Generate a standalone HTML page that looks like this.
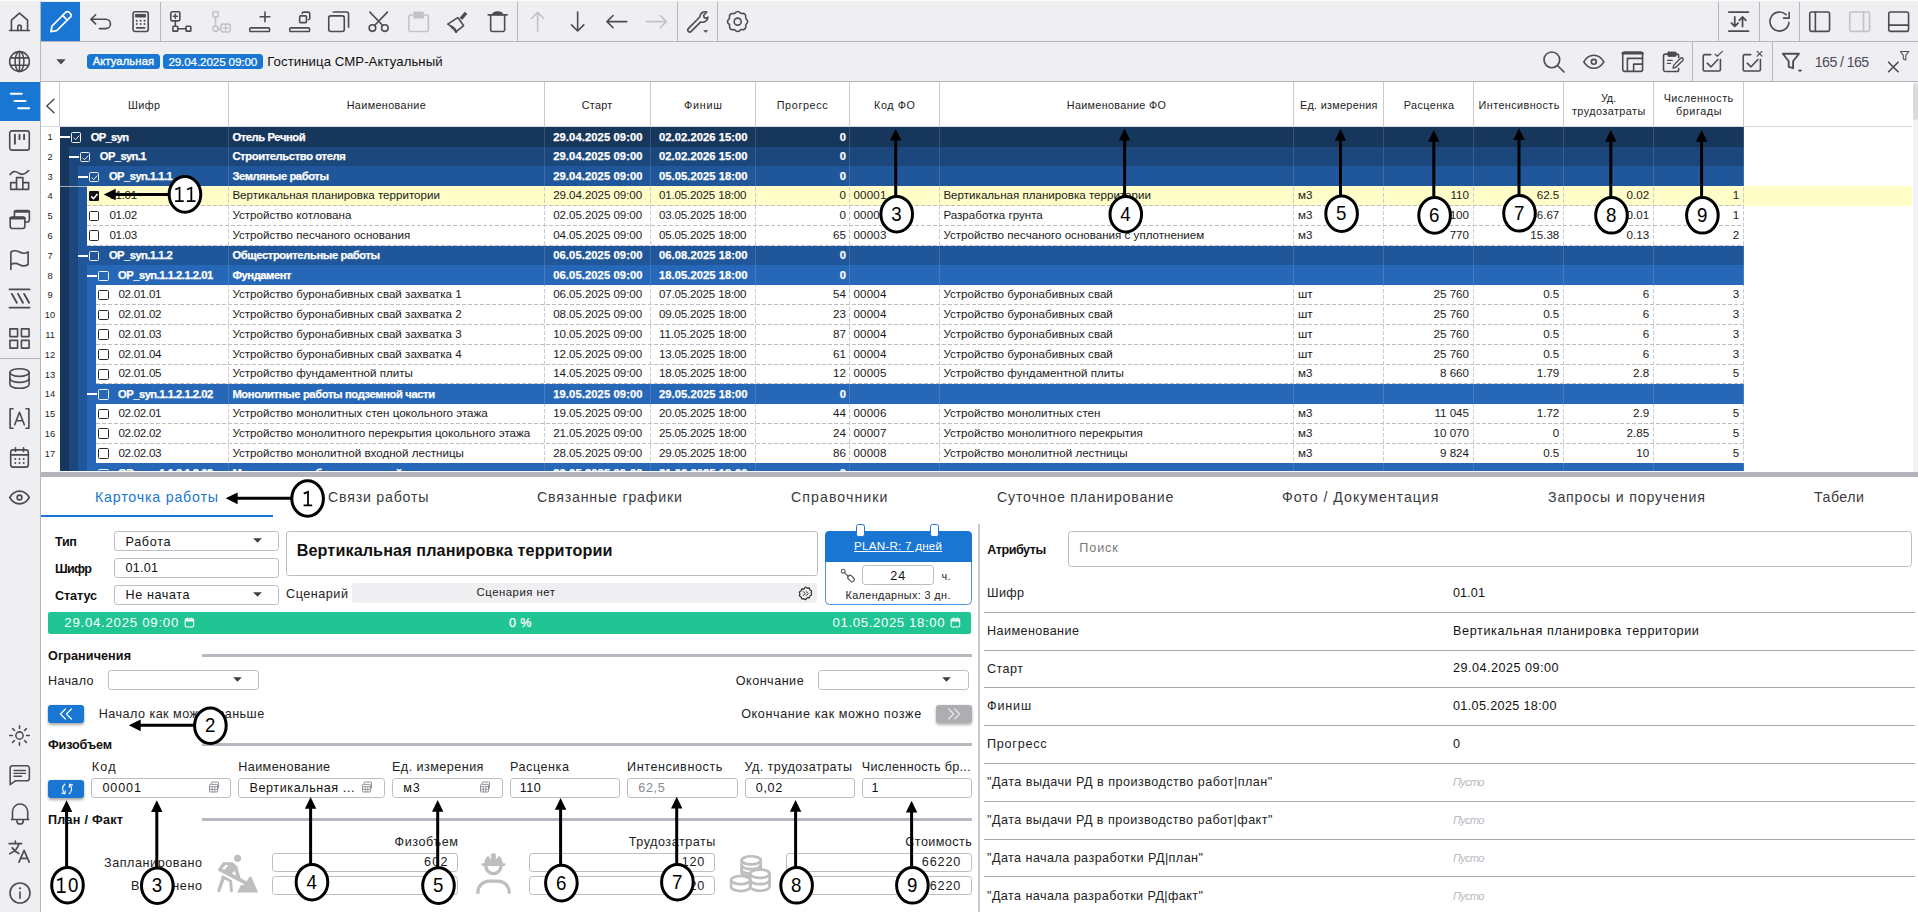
<!DOCTYPE html>
<html lang="ru"><head><meta charset="utf-8"><title>Plan-R</title><style>html,body{margin:0;padding:0}body{width:1918px;height:912px;overflow:hidden;position:relative;background:#fff;font-family:"Liberation Sans",sans-serif;}.a{position:absolute;display:block}.t{position:absolute;white-space:nowrap;display:block}</style></head><body>
<div class="a" style="left:0px;top:0px;width:1918px;height:81.5px;background:#efeff2;"></div>
<div class="a" style="left:0px;top:0px;width:40px;height:912px;background:#efeff2;"></div>
<div class="a" style="left:40px;top:0px;width:1px;height:912px;background:#b5b5bd;"></div>
<div class="a" style="left:0px;top:0px;width:1918px;height:1px;background:#fdfdfd;"></div>
<div class="a" style="left:41px;top:40.8px;width:1877px;height:1px;background:#b5b5bd;"></div>
<div class="a" style="left:41px;top:81px;width:1877px;height:1px;background:#b5b5bd;"></div>
<svg class="a" style="left:8.3px;top:10.2px;color:#4b4b52;" width="23" height="23" viewBox="0 0 24 24" fill="none" stroke="#4b4b52" stroke-width="1.7" stroke-linecap="round" stroke-linejoin="round"><path d="M1.600 21.400h20.800"/><path d="M3.600 21.400V10.600L12 3.200l8.400 7.400v10.800"/><path d="M10.200 21.400v-3.800a1.800 1.800 0 0 1 3.600 0v3.800"/></svg>
<svg class="a" style="left:8.2px;top:50.2px;color:#4b4b52;" width="23" height="23" viewBox="0 0 24 24" fill="none" stroke="#4b4b52" stroke-width="1.6" stroke-linecap="round" stroke-linejoin="round"><circle cx="12" cy="12" r="10.3"/><ellipse cx="12" cy="12" rx="4.6" ry="10.3"/><path d="M12 1.7v20.6M2.6 8.2h18.8M2.6 15.8h18.8"/></svg>
<div class="a" style="left:0px;top:81.5px;width:40px;height:39.5px;background:#1976d2;"></div>
<svg class="a" style="left:8.8px;top:89.8px;color:#fff;" width="22" height="22" viewBox="0 0 24 24" fill="none" stroke="#fff" stroke-width="2.2" stroke-linecap="round" stroke-linejoin="round"><path d="M2 4h12M6 12h12M10 20h12"/></svg>
<svg class="a" style="left:8.1px;top:129px;color:#4b4b52;" width="23" height="23" viewBox="0 0 24 24" fill="none" stroke="#4b4b52" stroke-width="1.7" stroke-linecap="round" stroke-linejoin="round"><rect x="1.8" y="2" width="20.4" height="20" rx="2.2"/><path d="M7.2 6v9.5M12 6v4.6M16.8 6v4.6" stroke-width="2"/></svg>
<svg class="a" style="left:8.1px;top:169px;color:#4b4b52;" width="23" height="23" viewBox="0 0 24 24" fill="none" stroke="#4b4b52" stroke-width="1.7" stroke-linecap="round" stroke-linejoin="round"><path d="M2.200 5.800c2.500-3.600 5.500-4 8.600-1.700s6.500 2.200 10.800-2.500"/><path d="M2.800 21.200h18.700v-7h-6M8.900 21.200V9h6.600v12.200M8.900 14.200H2.800v7"/></svg>
<svg class="a" style="left:8.1px;top:208.8px;color:#4b4b52;" width="23" height="23" viewBox="0 0 24 24" fill="none" stroke="#4b4b52" stroke-width="1.7" stroke-linecap="round" stroke-linejoin="round"><path d="M6.700 8.400V3.800a2.200 2.200 0 0 1 2.200-2.200h11.200a2.200 2.200 0 0 1 2.200 2.200v7.600a2.200 2.200 0 0 1-2.200 2.200h-2.500"/><path d="M7.200 2.600h14.600" stroke-width="2.600"/><rect x="2.300" y="8.400" width="15.300" height="11.900" rx="2.200"/><path d="M2.800 9.600h14.300" stroke-width="2.800"/></svg>
<svg class="a" style="left:8.1px;top:248px;color:#4b4b52;" width="23" height="23" viewBox="0 0 24 24" fill="none" stroke="#4b4b52" stroke-width="1.7" stroke-linecap="round" stroke-linejoin="round"><path d="M3 22.5V4.2c3.2-2.2 6-1.6 9 0s6 1.8 9-.2v13.2c-3 2-6 1.800-9 .2s-5.800-2.200-9 0"/></svg>
<svg class="a" style="left:8.1px;top:287px;color:#4b4b52;" width="23" height="23" viewBox="0 0 24 24" fill="none" stroke="#4b4b52" stroke-width="1.7" stroke-linecap="round" stroke-linejoin="round"><path d="M1.500 2.500h21M1.500 21.500h21" stroke-width="1.900"/><path d="M4 7.200l5.200 9.200M10.400 7.200l5.200 9.200M16.800 7.200l5.200 9.200" stroke-width="2"/></svg>
<svg class="a" style="left:8.1px;top:326.5px;color:#4b4b52;" width="23" height="23" viewBox="0 0 24 24" fill="none" stroke="#4b4b52" stroke-width="1.7" stroke-linecap="round" stroke-linejoin="round"><rect x="2" y="2" width="8" height="8"/><rect x="14" y="2" width="8" height="8"/><rect x="2" y="14" width="8" height="8"/><rect x="14" y="14" width="8" height="8"/></svg>
<div class="a" style="left:0px;top:357.6px;width:40px;height:1px;background:#b5b5bd;"></div>
<svg class="a" style="left:8.1px;top:367.1px;color:#4b4b52;" width="23" height="23" viewBox="0 0 24 24" fill="none" stroke="#4b4b52" stroke-width="1.7" stroke-linecap="round" stroke-linejoin="round"><ellipse cx="12" cy="5.800" rx="10" ry="4"/><path d="M2 5.800v12.400c0 2.200 4.500 4 10 4s10-1.800 10-4V5.800"/><path d="M2 12c0 2.200 4.500 4 10 4s10-1.800 10-4"/></svg>
<svg class="a" style="left:8.1px;top:406.8px;color:#4b4b52;" width="23" height="23" viewBox="0 0 24 24" fill="none" stroke="#4b4b52" stroke-width="1.7" stroke-linecap="round" stroke-linejoin="round"><path d="M5.200 1.800H2.200v20.400h3M18.800 1.800h3v20.400h-3"/><path d="M7 18.500L12 5.500l5 13M8.700 14.300h6.600"/></svg>
<svg class="a" style="left:8.1px;top:446.3px;color:#4b4b52;" width="23" height="23" viewBox="0 0 24 24" fill="none" stroke="#4b4b52" stroke-width="1.7" stroke-linecap="round" stroke-linejoin="round"><rect x="2.800" y="4" width="18.400" height="18" rx="2.400"/><path d="M2.800 9.200h18.400M7.800 1.800v4M16.200 1.800v4"/><path d="M7.600 13.500h.01M12 13.500h.01M16.400 13.500h.01M7.600 17.800h.01M12 17.800h.01M16.400 17.800h.01" stroke-width="2"/></svg>
<svg class="a" style="left:8.1px;top:486.1px;color:#4b4b52;" width="23" height="23" viewBox="0 0 24 24" fill="none" stroke="#4b4b52" stroke-width="1.7" stroke-linecap="round" stroke-linejoin="round"><path d="M1.800 12c2.600-4.400 6-6.600 10.200-6.600s7.600 2.200 10.200 6.600c-2.600 4.400-6 6.600-10.200 6.600S4.400 16.400 1.800 12z"/><circle cx="12" cy="12" r="2.500"/></svg>
<svg class="a" style="left:8.1px;top:723.7px;color:#4b4b52;" width="23" height="23" viewBox="0 0 24 24" fill="none" stroke="#4b4b52" stroke-width="1.6" stroke-linecap="round" stroke-linejoin="round"><circle cx="12" cy="12" r="3.800"/><path d="M12 1.800v2.800M12 19.400v2.800M1.800 12h2.800M19.400 12h2.800M4.800 4.800l2 2M17.200 17.200l2 2M4.800 19.200l2-2M17.200 6.800l2-2"/></svg>
<svg class="a" style="left:7.85px;top:763.25px;color:#4b4b52;" width="23.5" height="23.5" viewBox="0 0 24 24" fill="none" stroke="#4b4b52" stroke-width="1.6" stroke-linecap="round" stroke-linejoin="round"><path d="M2.200 5.200a2.400 2.400 0 0 1 2.400-2.400h14.800a2.400 2.400 0 0 1 2.400 2.400v10.600a2.400 2.400 0 0 1-2.400 2.400H7.400L2.200 22.200z"/><path d="M6.200 7.600h11.600M6.200 10.600h11.600M6.200 13.600h7.600" stroke-width="1.500"/></svg>
<svg class="a" style="left:7.6px;top:801.5px;color:#4b4b52;" width="24" height="24" viewBox="0 0 24 24" fill="none" stroke="#4b4b52" stroke-width="1.6" stroke-linecap="round" stroke-linejoin="round"><path d="M3.400 17.500h17.400"/><path d="M4.500 17.500V9.600a7.600 7.600 0 0 1 15.200 0v7.900"/><path d="M9 18.400v.5a3.100 3.100 0 0 0 6.200 0v-.5"/></svg>
<svg class="a" style="left:7.1px;top:839.1px;color:#4b4b52;" width="25" height="25" viewBox="0 0 24 24" fill="none" stroke="#4b4b52" stroke-width="1.6" stroke-linecap="round" stroke-linejoin="round"><path d="M2 4.500h12M8 2v2.500M11.500 4.500c-.9 4.200-4 7.600-8.800 9.600M5 8.400c1.300 2.400 3.400 4.200 6.400 5.600"/><path d="M11.500 22.200l4.900-11.200 4.900 11.200M13.200 18.600h6.400"/></svg>
<svg class="a" style="left:7.6px;top:880.8px;color:#4b4b52;" width="24" height="24" viewBox="0 0 24 24" fill="none" stroke="#4b4b52" stroke-width="1.6" stroke-linecap="round" stroke-linejoin="round"><circle cx="12" cy="12" r="10"/><path d="M12 11v6.200"/><path d="M12 7.300h.01" stroke-width="2.200"/></svg>
<div class="a" style="left:41px;top:1.8px;width:39.3px;height:39px;background:#1976d2;"></div>
<svg class="a" style="left:49px;top:10px;color:#fff;" width="23" height="23" viewBox="0 0 24 24" fill="none" stroke="#fff" stroke-width="1.8" stroke-linecap="round" stroke-linejoin="round"><path d="M2 22.500l1.200-5.800L17.600 2.300a2.300 2.300 0 0 1 3.300 0l1.600 1.600a2.300 2.300 0 0 1 0 3.300L8 21.600z"/><path d="M14.200 5.700l4.800 4.800"/></svg>
<svg class="a" style="left:88.85px;top:9.85px;color:#4b4b52;" width="23.3" height="23.3" viewBox="0 0 24 24" fill="none" stroke="#4b4b52" stroke-width="1.65" stroke-linecap="round" stroke-linejoin="round"><path d="M6.800 4.900L2 9.600l4.800 4.700M2 9.600h15.300a4.800 4.800 0 0 1 0 9.600H10.700"/></svg>
<svg class="a" style="left:129.05px;top:9.85px;color:#4b4b52;" width="23.3" height="23.3" viewBox="0 0 24 24" fill="none" stroke="#4b4b52" stroke-width="1.65" stroke-linecap="round" stroke-linejoin="round"><rect x="4.200" y="1.800" width="15.600" height="20.400" rx="2"/><rect x="7" y="4.600" width="10" height="2.600" fill="currentColor" stroke-width="1"/><path d="M8 11h.01M12 11h.01M16 11h.01M8 14.500h.01M12 14.500h.01M16 14.500h.01M8 18.400h8" stroke-width="2"/></svg>
<svg class="a" style="left:168.85px;top:9.85px;color:#4b4b52;" width="23.3" height="23.3" viewBox="0 0 24 24" fill="none" stroke="#4b4b52" stroke-width="1.65" stroke-linecap="round" stroke-linejoin="round"><rect x="1.800" y="1.800" width="9.400" height="9.400" rx="1.600"/><path d="M6.500 4.300v4.400M4.300 6.500h4.400" stroke-width="1.500"/><path d="M6.500 11.200v5.600M9 19.300h8.500"/><rect x="4" y="16.800" width="5" height="5" rx=".8"/><rect x="17.500" y="16.800" width="5" height="5" rx=".8"/></svg>
<svg class="a" style="left:208.65px;top:9.85px;color:#c2c2c8;" width="23.3" height="23.3" viewBox="0 0 24 24" fill="none" stroke="#c2c2c8" stroke-width="1.65" stroke-linecap="round" stroke-linejoin="round"><rect x="4" y="1.800" width="5.400" height="5.400" rx="1"/><path d="M6.700 7.200v9.400M9.400 19.300h3"/><circle cx="6.700" cy="19.300" r="2.700"/><rect x="12.400" y="14.600" width="9.400" height="8" rx="1.600"/><path d="M17.100 16.400v4.400M14.900 18.600h4.400" stroke-width="1.500"/></svg>
<svg class="a" style="left:247.95px;top:9.85px;color:#4b4b52;" width="23.3" height="23.3" viewBox="0 0 24 24" fill="none" stroke="#4b4b52" stroke-width="1.65" stroke-linecap="round" stroke-linejoin="round"><rect x="1.800" y="18.400" width="20.400" height="3.800" rx="1.200"/><path d="M17.500 2v10M12.500 7h10"/></svg>
<svg class="a" style="left:287.75px;top:9.85px;color:#4b4b52;" width="23.3" height="23.3" viewBox="0 0 24 24" fill="none" stroke="#4b4b52" stroke-width="1.65" stroke-linecap="round" stroke-linejoin="round"><rect x="1.800" y="18.400" width="20.400" height="3.800" rx="1.200"/><rect x="12" y="6" width="7" height="7" rx="1"/><path d="M14.600 3.600a1.400 1.400 0 0 1 1.400-1.400h5a1.400 1.400 0 0 1 1.400 1.400v5a1.400 1.400 0 0 1-1.400 1.400"/></svg>
<svg class="a" style="left:327.05px;top:9.85px;color:#4b4b52;" width="23.3" height="23.3" viewBox="0 0 24 24" fill="none" stroke="#4b4b52" stroke-width="1.65" stroke-linecap="round" stroke-linejoin="round"><rect x="1.800" y="6" width="16" height="16.200" rx="2"/><path d="M6.400 2h13.800a2 2 0 0 1 2 2v13.800"/></svg>
<svg class="a" style="left:366.65px;top:9.85px;color:#4b4b52;" width="23.3" height="23.3" viewBox="0 0 24 24" fill="none" stroke="#4b4b52" stroke-width="1.65" stroke-linecap="round" stroke-linejoin="round"><circle cx="5.600" cy="18.600" r="3.400"/><circle cx="18.400" cy="18.600" r="3.400"/><path d="M7.800 16L21 2.200M16.200 16L3 2.200"/></svg>
<svg class="a" style="left:406.65px;top:9.85px;color:#c2c2c8;" width="23.3" height="23.3" viewBox="0 0 24 24" fill="none" stroke="#c2c2c8" stroke-width="1.65" stroke-linecap="round" stroke-linejoin="round"><path d="M6 5.200H3.600a1.600 1.600 0 0 0-1.600 1.600v13.800a1.600 1.600 0 0 0 1.600 1.600h16.800a1.600 1.600 0 0 0 1.600-1.600V6.800a1.600 1.600 0 0 0-1.600-1.600H18"/><rect x="7" y="2" width="10" height="6.400" fill="currentColor" stroke-width=".6"/></svg>
<svg class="a" style="left:445.75px;top:9.85px;color:#4b4b52;" width="23.3" height="23.3" viewBox="0 0 24 24" fill="none" stroke="#4b4b52" stroke-width="1.65" stroke-linecap="round" stroke-linejoin="round"><path d="M1.800 14.600l10.400-6.800 6 8.400-7.800 6.200c-1.600-3-4.600-5.600-8.600-7.800z"/><path d="M15.300 9.200l5.400-6.200" stroke-width="3.400" stroke-linecap="butt"/><path d="M6 17.400c2 1.200 3.400 2.800 4.400 5" stroke-width="2.600"/></svg>
<svg class="a" style="left:485.85px;top:9.85px;color:#4b4b52;" width="23.3" height="23.3" viewBox="0 0 24 24" fill="none" stroke="#4b4b52" stroke-width="1.65" stroke-linecap="round" stroke-linejoin="round"><path d="M2.200 5h19.600"/><path d="M7 4.600c.6-2 1.600-2.600 5-2.600s4.400.6 5 2.600z" fill="currentColor"/><path d="M4.800 5v15.400a1.800 1.800 0 0 0 1.800 1.800h10.800a1.800 1.800 0 0 0 1.800-1.800V5"/></svg>
<svg class="a" style="left:525.65px;top:9.85px;color:#c2c2c8;" width="23.3" height="23.3" viewBox="0 0 24 24" fill="none" stroke="#c2c2c8" stroke-width="1.65" stroke-linecap="round" stroke-linejoin="round"><path d="M12 22V2.400M5.700 8.700L12 2.400l6.300 6.300"/></svg>
<svg class="a" style="left:565.55px;top:9.85px;color:#4b4b52;" width="23.3" height="23.3" viewBox="0 0 24 24" fill="none" stroke="#4b4b52" stroke-width="1.65" stroke-linecap="round" stroke-linejoin="round"><path d="M12 2v19.600M5.700 15.300l6.300 6.300 6.300-6.300"/></svg>
<svg class="a" style="left:604.75px;top:9.85px;color:#4b4b52;" width="23.3" height="23.3" viewBox="0 0 24 24" fill="none" stroke="#4b4b52" stroke-width="1.65" stroke-linecap="round" stroke-linejoin="round"><path d="M22.400 12H2M8.300 5.700L2 12l6.300 6.300"/></svg>
<svg class="a" style="left:644.75px;top:9.85px;color:#c2c2c8;" width="23.3" height="23.3" viewBox="0 0 24 24" fill="none" stroke="#c2c2c8" stroke-width="1.65" stroke-linecap="round" stroke-linejoin="round"><path d="M1.600 12H22M15.700 5.700L22 12l-6.300 6.300"/></svg>
<svg class="a" style="left:685.65px;top:9.85px;color:#4b4b52;" width="23.3" height="23.3" viewBox="0 0 24 24" fill="none" stroke="#4b4b52" stroke-width="1.65" stroke-linecap="round" stroke-linejoin="round"><path d="M14.200 7.200a5.600 5.600 0 0 1 7.200-5.200l-3.200 3.400.6 2.600 2.600.6 1.200-1.300a5.600 5.600 0 0 1-7.400 5L5.400 22a2.050 2.050 0 0 1-3-2.800z"/><path d="M18.800 21.200h3.400l-1.700 1.700z" fill="currentColor" stroke-width=".8"/></svg>
<svg class="a" style="left:725.55px;top:9.85px;color:#4b4b52;" width="23.3" height="23.3" viewBox="0 0 24 24" fill="none" stroke="#4b4b52" stroke-width="1.65" stroke-linecap="round" stroke-linejoin="round"><path d="M12 1.600c1 0 1.800.5 2.500 1.300.6.700 1.300.9 2.200.7 1.100-.3 2 0 2.800.8.700.700 1.100 1.700.8 2.800-.2.900 0 1.600.7 2.200.8.700 1.300 1.500 1.300 2.500s-.5 1.800-1.300 2.500c-.7.600-.9 1.300-.7 2.200.3 1.100 0 2-.8 2.800-.7.700-1.700 1.100-2.800.8-.9-.2-1.600 0-2.200.7-.7.800-1.500 1.300-2.500 1.300s-1.800-.5-2.500-1.300c-.6-.7-1.300-.9-2.200-.7-1.100.3-2 0-2.800-.8-.7-.7-1.100-1.700-.8-2.800.2-.9 0-1.600-.7-2.200C2.100 13.800 1.600 13 1.600 12s.5-1.800 1.300-2.500c.7-.6.900-1.300.7-2.200-.3-1.100 0-2 .8-2.800.7-.7 1.700-1.100 2.800-.8.9.2 1.600 0 2.200-.7C10.200 2.100 11 1.600 12 1.600z"/><circle cx="12" cy="12" r="3.600"/></svg>
<svg class="a" style="left:1727.15px;top:9.85px;color:#4b4b52;" width="23.3" height="23.3" viewBox="0 0 24 24" fill="none" stroke="#4b4b52" stroke-width="1.65" stroke-linecap="round" stroke-linejoin="round"><path d="M1.800 2.200h20.400M1.800 21.800h20.400"/><path d="M8 7v9.600M4.600 13.400L8 16.800l3.400-3.400M16 17V7.400M12.600 10.600L16 7.200l3.400 3.400" stroke-width="1.800"/></svg>
<svg class="a" style="left:1768.05px;top:9.85px;color:#4b4b52;" width="23.3" height="23.3" viewBox="0 0 24 24" fill="none" stroke="#4b4b52" stroke-width="1.65" stroke-linecap="round" stroke-linejoin="round"><path d="M21.600 12.800a9.800 9.800 0 1 1-3-8"/><path d="M21.800 2.600v5.800H16"/></svg>
<svg class="a" style="left:1807.95px;top:9.85px;color:#4b4b52;" width="23.3" height="23.3" viewBox="0 0 24 24" fill="none" stroke="#4b4b52" stroke-width="1.65" stroke-linecap="round" stroke-linejoin="round"><rect x="1.800" y="2" width="20.400" height="20" rx="1.800"/><path d="M7.600 2v20"/></svg>
<svg class="a" style="left:1847.85px;top:9.85px;color:#c2c2c8;" width="23.3" height="23.3" viewBox="0 0 24 24" fill="none" stroke="#c2c2c8" stroke-width="1.65" stroke-linecap="round" stroke-linejoin="round"><rect x="1.800" y="2" width="20.400" height="20" rx="1.800"/><path d="M16 2v20"/></svg>
<svg class="a" style="left:1886.85px;top:9.85px;color:#4b4b52;" width="23.3" height="23.3" viewBox="0 0 24 24" fill="none" stroke="#4b4b52" stroke-width="1.65" stroke-linecap="round" stroke-linejoin="round"><rect x="1.800" y="2" width="20.400" height="20" rx="1.800"/><path d="M1.800 15.600h20.400"/></svg>
<div class="a" style="left:160.3px;top:1.5px;width:1px;height:39.5px;background:#b5b5bd;"></div>
<div class="a" style="left:517.2px;top:1.5px;width:1px;height:39.5px;background:#b5b5bd;"></div>
<div class="a" style="left:677.2px;top:1.5px;width:1px;height:39.5px;background:#b5b5bd;"></div>
<div class="a" style="left:717.2px;top:1.5px;width:1px;height:39.5px;background:#b5b5bd;"></div>
<div class="a" style="left:1718.4px;top:1.5px;width:1px;height:39.5px;background:#b5b5bd;"></div>
<div class="a" style="left:1759.4px;top:1.5px;width:1px;height:39.5px;background:#b5b5bd;"></div>
<div class="a" style="left:1799.2px;top:1.5px;width:1px;height:39.5px;background:#b5b5bd;"></div>
<svg class="a" style="left:55.5px;top:58.5px" width="10" height="6" viewBox="0 0 10 6"><path d="M0.300 0.300h9.400L5 5.400z" fill="#4b4b52"/></svg>
<div class="a" style="left:87px;top:53.8px;width:72.8px;height:14.8px;background:#1976d2;border-radius:3.5px;"></div>
<span class="t" style="left:92.65px;top:53.9px;font-size:11.2px;line-height:15px;color:#fff;letter-spacing:0.13px;-webkit-text-stroke:.35px #fff;">Актуальная</span>
<div class="a" style="left:163px;top:53.8px;width:99.8px;height:14.8px;background:#1976d2;border-radius:3.5px;"></div>
<span class="t" style="left:168.4px;top:53.9px;font-size:11.7px;line-height:15px;color:#fff;letter-spacing:-0.14px;-webkit-text-stroke:.2px #fff;">29.04.2025 09:00</span>
<span class="t" style="left:267.3px;top:52.9px;font-size:13.2px;line-height:17px;color:#111;letter-spacing:0.07px;">Гостиница СМР-Актуальный</span>
<svg class="a" style="left:1542px;top:49.7px;color:#4b4b52;" width="23.6" height="23.6" viewBox="0 0 24 24" fill="none" stroke="#4b4b52" stroke-width="1.65" stroke-linecap="round" stroke-linejoin="round"><circle cx="10" cy="10" r="8"/><path d="M16 16l6.400 6.400"/></svg>
<svg class="a" style="left:1582px;top:49.8px;color:#4b4b52;" width="23.6" height="23.6" viewBox="0 0 24 24" fill="none" stroke="#4b4b52" stroke-width="1.65" stroke-linecap="round" stroke-linejoin="round"><path d="M1.800 12c2.600-4.400 6-6.600 10.200-6.600s7.600 2.200 10.200 6.600c-2.600 4.400-6 6.600-10.200 6.600S4.400 16.400 1.800 12z"/><circle cx="12" cy="12" r="2.500"/></svg>
<svg class="a" style="left:1621.05px;top:49.75px;color:#4b4b52;" width="23.3" height="23.3" viewBox="0 0 24 24" fill="none" stroke="#4b4b52" stroke-width="1.65" stroke-linecap="round" stroke-linejoin="round"><rect x="1.800" y="2" width="20.400" height="20" rx="1.800"/><path d="M1.800 3.400h20.400" stroke-width="2.600"/><path d="M6.600 22V8.600h15.600M13 22v-7.400h9.200"/></svg>
<svg class="a" style="left:1661.35px;top:49.75px;color:#4b4b52;" width="23.3" height="23.3" viewBox="0 0 24 24" fill="none" stroke="#4b4b52" stroke-width="1.65" stroke-linecap="round" stroke-linejoin="round"><path d="M7 4.200H4.400a1.800 1.800 0 0 0-1.800 1.800v14.400a1.800 1.800 0 0 0 1.800 1.800h12a1.800 1.800 0 0 0 1.800-1.800V19"/><path d="M15.600 4.200h.8a1.800 1.800 0 0 1 1.800 1.800v2"/><rect x="7" y="2" width="8.600" height="4.600" rx=".8" fill="currentColor" stroke-width=".8"/><path d="M6.600 10.600h5M6.600 13.800h3.200" stroke-width="1.300"/><path d="M12.400 18.600l.8-3 7-7a1.500 1.500 0 0 1 2.200 2.200l-7 7z" stroke-width="1.400"/></svg>
<svg class="a" style="left:1701.35px;top:49.75px;color:#4b4b52;" width="23.3" height="23.3" viewBox="0 0 24 24" fill="none" stroke="#4b4b52" stroke-width="1.65" stroke-linecap="round" stroke-linejoin="round"><path d="M10 4.800H3.900a1.600 1.600 0 0 0-1.600 1.600v13.700a1.600 1.600 0 0 0 1.600 1.600h14.500a1.600 1.600 0 0 0 1.600-1.600V9.800"/><path d="M6.400 13.600l4 3.700 7-7.500"/><path d="M14.400 4.200l2.300 2.200 5.400-5" stroke-width="1.200"/></svg>
<svg class="a" style="left:1741.35px;top:49.75px;color:#4b4b52;" width="23.3" height="23.3" viewBox="0 0 24 24" fill="none" stroke="#4b4b52" stroke-width="1.65" stroke-linecap="round" stroke-linejoin="round"><path d="M10 4.800H3.900a1.600 1.600 0 0 0-1.600 1.600v13.700a1.600 1.600 0 0 0 1.600 1.600h14.500a1.600 1.600 0 0 0 1.600-1.600V9.800"/><path d="M6.400 13.600l4 3.700 7-7.500"/><path d="M16.600 1.400l5 5M21.600 1.400l-5 5" stroke-width="1.200"/></svg>
<svg class="a" style="left:1780.6px;top:50.8px;color:#4b4b52;" width="22" height="22" viewBox="0 0 24 24" fill="none" stroke="#4b4b52" stroke-width="1.65" stroke-linecap="round" stroke-linejoin="round"><path d="M2 3h17.600l-6.400 8.200v7.600l-4.800-1.400v-6.200z" stroke-width="2"/><path d="M19.200 20.800h3.400l-1.700 1.700z" fill="currentColor" stroke-width=".8"/></svg>
<svg class="a" style="left:1886.85px;top:49.95px;color:#4b4b52;" width="23.3" height="23.3" viewBox="0 0 24 24" fill="none" stroke="#4b4b52" stroke-width="1.65" stroke-linecap="round" stroke-linejoin="round"><path d="M1.600 12.600l9.800 9.800M11.400 12.600l-9.800 9.800" stroke-width="1.700"/><path d="M13.800 1.600h8.600l-3 4v4.600l-2.600-1v-3.600z" stroke-width="1.100"/></svg>
<div class="a" style="left:1692.2px;top:42px;width:1px;height:39px;background:#b5b5bd;"></div>
<div class="a" style="left:1772.4px;top:42px;width:1px;height:39px;background:#b5b5bd;"></div>
<span class="t" style="left:1814.8px;top:52.6px;font-size:14.2px;line-height:18px;color:#4a4a58;letter-spacing:-0.59px;">165 / 165</span>
<div class="a" style="left:41px;top:82px;width:1871px;height:44.6px;background:#fff;"></div>
<div class="a" style="left:1913px;top:82px;width:5px;height:390px;background:#f3f3f6;"></div>
<div class="a" style="left:1913px;top:82.5px;width:5px;height:37px;background:#dcdce0;border-radius:2.5px;"></div>
<div class="a" style="left:59px;top:82px;width:1px;height:44.6px;background:#c9c9cf;"></div>
<div class="a" style="left:228.2px;top:82px;width:1px;height:44.6px;background:#c9c9cf;"></div>
<div class="a" style="left:544.1px;top:82px;width:1px;height:44.6px;background:#c9c9cf;"></div>
<div class="a" style="left:649.8px;top:82px;width:1px;height:44.6px;background:#c9c9cf;"></div>
<div class="a" style="left:755.1px;top:82px;width:1px;height:44.6px;background:#c9c9cf;"></div>
<div class="a" style="left:849.1px;top:82px;width:1px;height:44.6px;background:#c9c9cf;"></div>
<div class="a" style="left:938.9px;top:82px;width:1px;height:44.6px;background:#c9c9cf;"></div>
<div class="a" style="left:1293.1px;top:82px;width:1px;height:44.6px;background:#c9c9cf;"></div>
<div class="a" style="left:1383.1px;top:82px;width:1px;height:44.6px;background:#c9c9cf;"></div>
<div class="a" style="left:1473.1px;top:82px;width:1px;height:44.6px;background:#c9c9cf;"></div>
<div class="a" style="left:1563.1px;top:82px;width:1px;height:44.6px;background:#c9c9cf;"></div>
<div class="a" style="left:1653.1px;top:82px;width:1px;height:44.6px;background:#c9c9cf;"></div>
<div class="a" style="left:1743.1px;top:82px;width:1px;height:44.6px;background:#c9c9cf;"></div>
<div class="a" style="left:41px;top:126px;width:1871px;height:1px;background:#d9d9de;"></div>
<svg class="a" style="left:45px;top:98px" width="11" height="16" viewBox="0 0 11 16" fill="none" stroke="#4b4b52" stroke-width="1.500" stroke-linecap="round" stroke-linejoin="round"><path d="M9 1.200L1.800 8 9 14.800"/></svg>
<span class="t" style="left:128px;top:97.6px;font-size:10.8px;line-height:14px;color:#1c1c1c;letter-spacing:0.39px;">Шифр</span>
<span class="t" style="left:346.7px;top:97.6px;font-size:10.8px;line-height:14px;color:#1c1c1c;letter-spacing:0.38px;">Наименование</span>
<span class="t" style="left:581.7px;top:97.6px;font-size:10.8px;line-height:14px;color:#1c1c1c;letter-spacing:0.31px;">Старт</span>
<span class="t" style="left:684px;top:97.6px;font-size:10.8px;line-height:14px;color:#1c1c1c;letter-spacing:0.77px;">Финиш</span>
<span class="t" style="left:776.7px;top:97.6px;font-size:10.8px;line-height:14px;color:#1c1c1c;letter-spacing:0.64px;">Прогресс</span>
<span class="t" style="left:874px;top:97.6px;font-size:10.8px;line-height:14px;color:#1c1c1c;letter-spacing:0.61px;">Код ФО</span>
<span class="t" style="left:1066.75px;top:97.6px;font-size:10.8px;line-height:14px;color:#1c1c1c;letter-spacing:0.34px;">Наименование ФО</span>
<span class="t" style="left:1299.95px;top:97.6px;font-size:10.8px;line-height:14px;color:#1c1c1c;letter-spacing:0.31px;">Ед. измерения</span>
<span class="t" style="left:1403.8px;top:97.6px;font-size:10.8px;line-height:14px;color:#1c1c1c;letter-spacing:0.42px;">Расценка</span>
<span class="t" style="left:1478.6px;top:97.6px;font-size:10.8px;line-height:14px;color:#1c1c1c;letter-spacing:0.43px;">Интенсивность</span>
<span class="t" style="left:1601px;top:90.8px;font-size:10.8px;line-height:14px;color:#1c1c1c;letter-spacing:-0.16px;">Уд.</span>
<span class="t" style="left:1571.95px;top:104.2px;font-size:10.8px;line-height:14px;color:#1c1c1c;letter-spacing:0.46px;">трудозатраты</span>
<span class="t" style="left:1663.65px;top:90.8px;font-size:10.8px;line-height:14px;color:#1c1c1c;letter-spacing:0.47px;">Численность</span>
<span class="t" style="left:1675.9px;top:104.2px;font-size:10.8px;line-height:14px;color:#1c1c1c;letter-spacing:0.6px;">бригады</span>
<div class="a" style="left:41px;top:126.800px;width:1871px;height:344.200px;overflow:hidden">
<div class="a" style="left:45.95px;top:59.4px;width:1825.05px;height:19.9px;background:#fffdc8;"></div>
<div class="a" style="left:18.8px;top:59px;width:27.15px;height:1px;background:rgba(214,208,208,.75);z-index:3;"></div>
<div class="a" style="left:187.2px;top:0;width:1px;height:346px;background:repeating-linear-gradient(180deg,#c3c3c9 0 3.600px,transparent 3.600px 6px)"></div>
<div class="a" style="left:503.1px;top:0;width:1px;height:346px;background:repeating-linear-gradient(180deg,#c3c3c9 0 3.600px,transparent 3.600px 6px)"></div>
<div class="a" style="left:608.8px;top:0;width:1px;height:346px;background:repeating-linear-gradient(180deg,#c3c3c9 0 3.600px,transparent 3.600px 6px)"></div>
<div class="a" style="left:714.1px;top:0;width:1px;height:346px;background:repeating-linear-gradient(180deg,#c3c3c9 0 3.600px,transparent 3.600px 6px)"></div>
<div class="a" style="left:808.1px;top:0;width:1px;height:346px;background:repeating-linear-gradient(180deg,#c3c3c9 0 3.600px,transparent 3.600px 6px)"></div>
<div class="a" style="left:897.9px;top:0;width:1px;height:346px;background:repeating-linear-gradient(180deg,#c3c3c9 0 3.600px,transparent 3.600px 6px)"></div>
<div class="a" style="left:1252.1px;top:0;width:1px;height:346px;background:repeating-linear-gradient(180deg,#c3c3c9 0 3.600px,transparent 3.600px 6px)"></div>
<div class="a" style="left:1342.1px;top:0;width:1px;height:346px;background:repeating-linear-gradient(180deg,#c3c3c9 0 3.600px,transparent 3.600px 6px)"></div>
<div class="a" style="left:1432.1px;top:0;width:1px;height:346px;background:repeating-linear-gradient(180deg,#c3c3c9 0 3.600px,transparent 3.600px 6px)"></div>
<div class="a" style="left:1522.1px;top:0;width:1px;height:346px;background:repeating-linear-gradient(180deg,#c3c3c9 0 3.600px,transparent 3.600px 6px)"></div>
<div class="a" style="left:1612.1px;top:0;width:1px;height:346px;background:repeating-linear-gradient(180deg,#c3c3c9 0 3.600px,transparent 3.600px 6px)"></div>
<div class="a" style="left:1702.1px;top:0;width:1px;height:346px;background:repeating-linear-gradient(180deg,#c3c3c9 0 3.600px,transparent 3.600px 6px)"></div>
<span class="t" style="left:6.41px;top:4.2px;font-size:9.3px;line-height:12px;color:#222;">1</span>
<div class="a" style="left:18.8px;top:0px;width:1683.8px;height:19.9px;background:#17365c;"></div>
<div class="a" style="left:19.2px;top:9.2px;width:9.5px;height:2px;background:#fff;"></div>
<div class="a" style="left:29.8px;top:5.3px;width:10.6px;height:10.6px;border:1px solid #eef2f8;border-radius:1.500px;box-sizing:border-box"></div>
<svg class="a" style="left:29.8px;top:5.3px" width="10.600" height="10.600" viewBox="0 0 10.600 10.600" fill="none" stroke="#e6ecf5" stroke-width="1"><path d="M2.600 5.700l2.100 2 3.500-4.100"/></svg>
<span class="t" style="left:49.8px;top:2.9px;font-size:11.2px;line-height:15px;color:#fff;font-weight:700;letter-spacing:-0.69px;-webkit-text-stroke:.25px #fff;">OP_syn</span>
<span class="t" style="left:191.4px;top:2.9px;font-size:11.2px;line-height:15px;color:#fff;font-weight:700;letter-spacing:-0.39px;-webkit-text-stroke:.25px #fff;">Отель Речной</span>
<span class="t" style="left:512.2px;top:2.9px;font-size:11.2px;line-height:15px;color:#fff;font-weight:700;letter-spacing:0.11px;-webkit-text-stroke:.25px #fff;">29.04.2025 09:00</span>
<span class="t" style="left:618px;top:2.9px;font-size:11.2px;line-height:15px;color:#fff;font-weight:700;letter-spacing:0.05px;-webkit-text-stroke:.25px #fff;">02.02.2026 15:00</span>
<span class="t" style="left:798.77px;top:2.9px;font-size:11.2px;line-height:15px;color:#fff;font-weight:700;-webkit-text-stroke:.25px #fff;">0</span>
<span class="t" style="left:6.41px;top:24px;font-size:9.3px;line-height:12px;color:#222;">2</span>
<div class="a" style="left:18.8px;top:19.8px;width:9.2px;height:19.9px;background:#17365c;"></div>
<div class="a" style="left:27.85px;top:19.8px;width:1674.75px;height:19.9px;background:#1c477c;"></div>
<div class="a" style="left:28.25px;top:29.2px;width:9.5px;height:2px;background:#fff;"></div>
<div class="a" style="left:38.85px;top:25.1px;width:10.6px;height:10.6px;border:1px solid #eef2f8;border-radius:1.500px;box-sizing:border-box"></div>
<svg class="a" style="left:38.85px;top:25.1px" width="10.600" height="10.600" viewBox="0 0 10.600 10.600" fill="none" stroke="#e6ecf5" stroke-width="1"><path d="M2.600 5.700l2.100 2 3.500-4.100"/></svg>
<span class="t" style="left:58.85px;top:22.7px;font-size:11.2px;line-height:15px;color:#fff;font-weight:700;letter-spacing:-0.61px;-webkit-text-stroke:.25px #fff;">OP_syn.1</span>
<span class="t" style="left:191.4px;top:22.7px;font-size:11.2px;line-height:15px;color:#fff;font-weight:700;letter-spacing:-0.37px;-webkit-text-stroke:.25px #fff;">Строительство отеля</span>
<span class="t" style="left:512.2px;top:22.7px;font-size:11.2px;line-height:15px;color:#fff;font-weight:700;letter-spacing:0.11px;-webkit-text-stroke:.25px #fff;">29.04.2025 09:00</span>
<span class="t" style="left:618px;top:22.7px;font-size:11.2px;line-height:15px;color:#fff;font-weight:700;letter-spacing:0.05px;-webkit-text-stroke:.25px #fff;">02.02.2026 15:00</span>
<span class="t" style="left:798.77px;top:22.7px;font-size:11.2px;line-height:15px;color:#fff;font-weight:700;-webkit-text-stroke:.25px #fff;">0</span>
<span class="t" style="left:6.41px;top:43.8px;font-size:9.3px;line-height:12px;color:#222;">3</span>
<div class="a" style="left:18.8px;top:39.6px;width:9.2px;height:19.9px;background:#17365c;"></div>
<div class="a" style="left:27.85px;top:39.6px;width:9.2px;height:19.9px;background:#1c477c;"></div>
<div class="a" style="left:36.9px;top:39.6px;width:1665.7px;height:19.9px;background:#20579a;"></div>
<div class="a" style="left:37.3px;top:49.2px;width:9.5px;height:2px;background:#fff;"></div>
<div class="a" style="left:47.9px;top:44.9px;width:10.6px;height:10.6px;border:1px solid #eef2f8;border-radius:1.500px;box-sizing:border-box"></div>
<svg class="a" style="left:47.9px;top:44.9px" width="10.600" height="10.600" viewBox="0 0 10.600 10.600" fill="none" stroke="#e6ecf5" stroke-width="1"><path d="M2.600 5.700l2.100 2 3.500-4.100"/></svg>
<span class="t" style="left:67.9px;top:42.5px;font-size:11.2px;line-height:15px;color:#fff;font-weight:700;letter-spacing:-0.53px;-webkit-text-stroke:.25px #fff;">OP_syn.1.1.1</span>
<span class="t" style="left:191.4px;top:42.5px;font-size:11.2px;line-height:15px;color:#fff;font-weight:700;letter-spacing:-0.4px;-webkit-text-stroke:.25px #fff;">Земляные работы</span>
<span class="t" style="left:512.2px;top:42.5px;font-size:11.2px;line-height:15px;color:#fff;font-weight:700;letter-spacing:0.11px;-webkit-text-stroke:.25px #fff;">29.04.2025 09:00</span>
<span class="t" style="left:618px;top:42.5px;font-size:11.2px;line-height:15px;color:#fff;font-weight:700;letter-spacing:0.05px;-webkit-text-stroke:.25px #fff;">05.05.2025 18:00</span>
<span class="t" style="left:798.77px;top:42.5px;font-size:11.2px;line-height:15px;color:#fff;font-weight:700;-webkit-text-stroke:.25px #fff;">0</span>
<span class="t" style="left:6.41px;top:63.6px;font-size:9.3px;line-height:12px;color:#222;">4</span>
<div class="a" style="left:18.8px;top:59.4px;width:9.2px;height:19.9px;background:#17365c;"></div>
<div class="a" style="left:27.85px;top:59.4px;width:9.2px;height:19.9px;background:#1c477c;"></div>
<div class="a" style="left:36.9px;top:59.4px;width:9.2px;height:19.9px;background:#20579a;"></div>
<div class="a" style="left:45.95px;top:78.4px;width:1656.65px;height:1px;background:repeating-linear-gradient(90deg,#bdbdc3 0 3.600px,transparent 3.600px 6px)"></div>
<div class="a" style="left:47.9px;top:64px;width:10.6px;height:10.6px;background:#111;border-radius:1.200px"></div>
<svg class="a" style="left:47.9px;top:64px" width="10.600" height="10.600" viewBox="0 0 10.600 10.600" fill="none" stroke="#fff" stroke-width="1.600"><path d="M2.200 5.400l2.300 2.300 4-4.700"/></svg>
<span class="t" style="left:68.4px;top:60.5px;font-size:11.6px;line-height:15px;color:#1a1a1a;letter-spacing:-0.33px;">01.01</span>
<span class="t" style="left:191.4px;top:60.5px;font-size:11.6px;line-height:15px;color:#1a1a1a;">Вертикальная планировка территории</span>
<span class="t" style="left:512.2px;top:60.5px;font-size:11.6px;line-height:15px;color:#1a1a1a;letter-spacing:-0.09px;">29.04.2025 09:00</span>
<span class="t" style="left:618px;top:60.5px;font-size:11.6px;line-height:15px;color:#1a1a1a;letter-spacing:-0.19px;">01.05.2025 18:00</span>
<span class="t" style="left:798.55px;top:60.5px;font-size:11.6px;line-height:15px;color:#1a1a1a;">0</span>
<span class="t" style="left:812.4px;top:60.5px;font-size:11.6px;line-height:15px;color:#1a1a1a;letter-spacing:0.19px;">00001</span>
<span class="t" style="left:902.4px;top:60.5px;font-size:11.6px;line-height:15px;color:#1a1a1a;">Вертикальная планировка территории</span>
<span class="t" style="left:1257px;top:60.5px;font-size:11.6px;line-height:15px;color:#1a1a1a;">м3</span>
<span class="t" style="left:1409.51px;top:60.5px;font-size:11.6px;line-height:15px;color:#1a1a1a;">110</span>
<span class="t" style="left:1495.72px;top:60.5px;font-size:11.6px;line-height:15px;color:#1a1a1a;">62.5</span>
<span class="t" style="left:1585.62px;top:60.5px;font-size:11.6px;line-height:15px;color:#1a1a1a;">0.02</span>
<span class="t" style="left:1691.75px;top:60.5px;font-size:11.6px;line-height:15px;color:#1a1a1a;">1</span>
<span class="t" style="left:6.41px;top:83.4px;font-size:9.3px;line-height:12px;color:#222;">5</span>
<div class="a" style="left:18.8px;top:79.2px;width:9.2px;height:19.9px;background:#17365c;"></div>
<div class="a" style="left:27.85px;top:79.2px;width:9.2px;height:19.9px;background:#1c477c;"></div>
<div class="a" style="left:36.9px;top:79.2px;width:9.2px;height:19.9px;background:#20579a;"></div>
<div class="a" style="left:45.95px;top:98.2px;width:1656.65px;height:1px;background:repeating-linear-gradient(90deg,#bdbdc3 0 3.600px,transparent 3.600px 6px)"></div>
<div class="a" style="left:47.9px;top:83.8px;width:10.6px;height:10.6px;background:#fff;border:1px solid #2a2a2a;border-radius:1.500px;box-sizing:border-box"></div>
<span class="t" style="left:68.4px;top:80.3px;font-size:11.6px;line-height:15px;color:#1a1a1a;letter-spacing:-0.33px;">01.02</span>
<span class="t" style="left:191.4px;top:80.3px;font-size:11.6px;line-height:15px;color:#1a1a1a;">Устройство котлована</span>
<span class="t" style="left:512.2px;top:80.3px;font-size:11.6px;line-height:15px;color:#1a1a1a;letter-spacing:-0.09px;">02.05.2025 09:00</span>
<span class="t" style="left:618px;top:80.3px;font-size:11.6px;line-height:15px;color:#1a1a1a;letter-spacing:-0.19px;">03.05.2025 18:00</span>
<span class="t" style="left:798.55px;top:80.3px;font-size:11.6px;line-height:15px;color:#1a1a1a;">0</span>
<span class="t" style="left:812.4px;top:80.3px;font-size:11.6px;line-height:15px;color:#1a1a1a;letter-spacing:0.19px;">00002</span>
<span class="t" style="left:902.4px;top:80.3px;font-size:11.6px;line-height:15px;color:#1a1a1a;">Разработка грунта</span>
<span class="t" style="left:1257px;top:80.3px;font-size:11.6px;line-height:15px;color:#1a1a1a;">м3</span>
<span class="t" style="left:1408.65px;top:80.3px;font-size:11.6px;line-height:15px;color:#1a1a1a;">100</span>
<span class="t" style="left:1489.27px;top:80.3px;font-size:11.6px;line-height:15px;color:#1a1a1a;">66.67</span>
<span class="t" style="left:1585.62px;top:80.3px;font-size:11.6px;line-height:15px;color:#1a1a1a;">0.01</span>
<span class="t" style="left:1691.75px;top:80.3px;font-size:11.6px;line-height:15px;color:#1a1a1a;">1</span>
<span class="t" style="left:6.41px;top:103.2px;font-size:9.3px;line-height:12px;color:#222;">6</span>
<div class="a" style="left:18.8px;top:99px;width:9.2px;height:19.9px;background:#17365c;"></div>
<div class="a" style="left:27.85px;top:99px;width:9.2px;height:19.9px;background:#1c477c;"></div>
<div class="a" style="left:36.9px;top:99px;width:9.2px;height:19.9px;background:#20579a;"></div>
<div class="a" style="left:45.95px;top:118px;width:1656.65px;height:1px;background:repeating-linear-gradient(90deg,#bdbdc3 0 3.600px,transparent 3.600px 6px)"></div>
<div class="a" style="left:47.9px;top:103.6px;width:10.6px;height:10.6px;background:#fff;border:1px solid #2a2a2a;border-radius:1.500px;box-sizing:border-box"></div>
<span class="t" style="left:68.4px;top:100.1px;font-size:11.6px;line-height:15px;color:#1a1a1a;letter-spacing:-0.33px;">01.03</span>
<span class="t" style="left:191.4px;top:100.1px;font-size:11.6px;line-height:15px;color:#1a1a1a;">Устройство песчаного основания</span>
<span class="t" style="left:512.2px;top:100.1px;font-size:11.6px;line-height:15px;color:#1a1a1a;letter-spacing:-0.09px;">04.05.2025 09:00</span>
<span class="t" style="left:618px;top:100.1px;font-size:11.6px;line-height:15px;color:#1a1a1a;letter-spacing:-0.19px;">05.05.2025 18:00</span>
<span class="t" style="left:792.1px;top:100.1px;font-size:11.6px;line-height:15px;color:#1a1a1a;">65</span>
<span class="t" style="left:812.4px;top:100.1px;font-size:11.6px;line-height:15px;color:#1a1a1a;letter-spacing:0.19px;">00003</span>
<span class="t" style="left:902.4px;top:100.1px;font-size:11.6px;line-height:15px;color:#1a1a1a;">Устройство песчаного основания с уплотнением</span>
<span class="t" style="left:1257px;top:100.1px;font-size:11.6px;line-height:15px;color:#1a1a1a;">м3</span>
<span class="t" style="left:1408.65px;top:100.1px;font-size:11.6px;line-height:15px;color:#1a1a1a;">770</span>
<span class="t" style="left:1489.27px;top:100.1px;font-size:11.6px;line-height:15px;color:#1a1a1a;">15.38</span>
<span class="t" style="left:1585.62px;top:100.1px;font-size:11.6px;line-height:15px;color:#1a1a1a;">0.13</span>
<span class="t" style="left:1691.75px;top:100.1px;font-size:11.6px;line-height:15px;color:#1a1a1a;">2</span>
<span class="t" style="left:6.41px;top:123px;font-size:9.3px;line-height:12px;color:#222;">7</span>
<div class="a" style="left:18.8px;top:118.8px;width:9.2px;height:19.9px;background:#17365c;"></div>
<div class="a" style="left:27.85px;top:118.8px;width:9.2px;height:19.9px;background:#1c477c;"></div>
<div class="a" style="left:36.9px;top:118.8px;width:1665.7px;height:19.9px;background:#20579a;"></div>
<div class="a" style="left:37.3px;top:128.2px;width:9.5px;height:2px;background:#fff;"></div>
<div class="a" style="left:47.9px;top:124.1px;width:10.6px;height:10.6px;border:1px solid #eef2f8;border-radius:1.500px;box-sizing:border-box"></div>
<span class="t" style="left:67.9px;top:121.7px;font-size:11.2px;line-height:15px;color:#fff;font-weight:700;letter-spacing:-0.53px;-webkit-text-stroke:.25px #fff;">OP_syn.1.1.2</span>
<span class="t" style="left:191.4px;top:121.7px;font-size:11.2px;line-height:15px;color:#fff;font-weight:700;letter-spacing:-0.39px;-webkit-text-stroke:.25px #fff;">Общестроительные работы</span>
<span class="t" style="left:512.2px;top:121.7px;font-size:11.2px;line-height:15px;color:#fff;font-weight:700;letter-spacing:0.11px;-webkit-text-stroke:.25px #fff;">06.05.2025 09:00</span>
<span class="t" style="left:618px;top:121.7px;font-size:11.2px;line-height:15px;color:#fff;font-weight:700;letter-spacing:0.05px;-webkit-text-stroke:.25px #fff;">06.08.2025 18:00</span>
<span class="t" style="left:798.77px;top:121.7px;font-size:11.2px;line-height:15px;color:#fff;font-weight:700;-webkit-text-stroke:.25px #fff;">0</span>
<span class="t" style="left:6.41px;top:142.8px;font-size:9.3px;line-height:12px;color:#222;">8</span>
<div class="a" style="left:18.8px;top:138.6px;width:9.2px;height:19.9px;background:#17365c;"></div>
<div class="a" style="left:27.85px;top:138.6px;width:9.2px;height:19.9px;background:#1c477c;"></div>
<div class="a" style="left:36.9px;top:138.6px;width:9.2px;height:19.9px;background:#20579a;"></div>
<div class="a" style="left:45.95px;top:138.6px;width:1656.65px;height:19.9px;background:#2767b7;"></div>
<div class="a" style="left:46.35px;top:148.2px;width:9.5px;height:2px;background:#fff;"></div>
<div class="a" style="left:56.95px;top:143.9px;width:10.6px;height:10.6px;border:1px solid #eef2f8;border-radius:1.500px;box-sizing:border-box"></div>
<span class="t" style="left:76.95px;top:141.5px;font-size:11.2px;line-height:15px;color:#fff;font-weight:700;letter-spacing:-0.48px;-webkit-text-stroke:.25px #fff;">OP_syn.1.1.2.1.2.01</span>
<span class="t" style="left:191.4px;top:141.5px;font-size:11.2px;line-height:15px;color:#fff;font-weight:700;letter-spacing:-0.43px;-webkit-text-stroke:.25px #fff;">Фундамент</span>
<span class="t" style="left:512.2px;top:141.5px;font-size:11.2px;line-height:15px;color:#fff;font-weight:700;letter-spacing:0.11px;-webkit-text-stroke:.25px #fff;">06.05.2025 09:00</span>
<span class="t" style="left:618px;top:141.5px;font-size:11.2px;line-height:15px;color:#fff;font-weight:700;letter-spacing:0.05px;-webkit-text-stroke:.25px #fff;">18.05.2025 18:00</span>
<span class="t" style="left:798.77px;top:141.5px;font-size:11.2px;line-height:15px;color:#fff;font-weight:700;-webkit-text-stroke:.25px #fff;">0</span>
<span class="t" style="left:6.41px;top:162.6px;font-size:9.3px;line-height:12px;color:#222;">9</span>
<div class="a" style="left:18.8px;top:158.4px;width:9.2px;height:19.9px;background:#17365c;"></div>
<div class="a" style="left:27.85px;top:158.4px;width:9.2px;height:19.9px;background:#1c477c;"></div>
<div class="a" style="left:36.9px;top:158.4px;width:9.2px;height:19.9px;background:#20579a;"></div>
<div class="a" style="left:45.95px;top:158.4px;width:9.2px;height:19.9px;background:#2767b7;"></div>
<div class="a" style="left:55px;top:177.4px;width:1647.6px;height:1px;background:repeating-linear-gradient(90deg,#bdbdc3 0 3.600px,transparent 3.600px 6px)"></div>
<div class="a" style="left:56.95px;top:163px;width:10.6px;height:10.6px;background:#fff;border:1px solid #2a2a2a;border-radius:1.500px;box-sizing:border-box"></div>
<span class="t" style="left:77.45px;top:159.5px;font-size:11.6px;line-height:15px;color:#1a1a1a;letter-spacing:-0.29px;">02.01.01</span>
<span class="t" style="left:191.4px;top:159.5px;font-size:11.6px;line-height:15px;color:#1a1a1a;">Устройство буронабивных свай захватка 1</span>
<span class="t" style="left:512.2px;top:159.5px;font-size:11.6px;line-height:15px;color:#1a1a1a;letter-spacing:-0.09px;">06.05.2025 09:00</span>
<span class="t" style="left:618px;top:159.5px;font-size:11.6px;line-height:15px;color:#1a1a1a;letter-spacing:-0.19px;">07.05.2025 18:00</span>
<span class="t" style="left:792.1px;top:159.5px;font-size:11.6px;line-height:15px;color:#1a1a1a;">54</span>
<span class="t" style="left:812.4px;top:159.5px;font-size:11.6px;line-height:15px;color:#1a1a1a;letter-spacing:0.19px;">00004</span>
<span class="t" style="left:902.4px;top:159.5px;font-size:11.6px;line-height:15px;color:#1a1a1a;">Устройство буронабивных свай</span>
<span class="t" style="left:1257px;top:159.5px;font-size:11.6px;line-height:15px;color:#1a1a1a;">шт</span>
<span class="t" style="left:1392.52px;top:159.5px;font-size:11.6px;line-height:15px;color:#1a1a1a;">25 760</span>
<span class="t" style="left:1502.17px;top:159.5px;font-size:11.6px;line-height:15px;color:#1a1a1a;">0.5</span>
<span class="t" style="left:1601.75px;top:159.5px;font-size:11.6px;line-height:15px;color:#1a1a1a;">6</span>
<span class="t" style="left:1691.75px;top:159.5px;font-size:11.6px;line-height:15px;color:#1a1a1a;">3</span>
<span class="t" style="left:3.83px;top:182.4px;font-size:9.3px;line-height:12px;color:#222;">10</span>
<div class="a" style="left:18.8px;top:178.2px;width:9.2px;height:19.9px;background:#17365c;"></div>
<div class="a" style="left:27.85px;top:178.2px;width:9.2px;height:19.9px;background:#1c477c;"></div>
<div class="a" style="left:36.9px;top:178.2px;width:9.2px;height:19.9px;background:#20579a;"></div>
<div class="a" style="left:45.95px;top:178.2px;width:9.2px;height:19.9px;background:#2767b7;"></div>
<div class="a" style="left:55px;top:197.2px;width:1647.6px;height:1px;background:repeating-linear-gradient(90deg,#bdbdc3 0 3.600px,transparent 3.600px 6px)"></div>
<div class="a" style="left:56.95px;top:182.8px;width:10.6px;height:10.6px;background:#fff;border:1px solid #2a2a2a;border-radius:1.500px;box-sizing:border-box"></div>
<span class="t" style="left:77.45px;top:179.3px;font-size:11.6px;line-height:15px;color:#1a1a1a;letter-spacing:-0.29px;">02.01.02</span>
<span class="t" style="left:191.4px;top:179.3px;font-size:11.6px;line-height:15px;color:#1a1a1a;">Устройство буронабивных свай захватка 2</span>
<span class="t" style="left:512.2px;top:179.3px;font-size:11.6px;line-height:15px;color:#1a1a1a;letter-spacing:-0.09px;">08.05.2025 09:00</span>
<span class="t" style="left:618px;top:179.3px;font-size:11.6px;line-height:15px;color:#1a1a1a;letter-spacing:-0.19px;">09.05.2025 18:00</span>
<span class="t" style="left:792.1px;top:179.3px;font-size:11.6px;line-height:15px;color:#1a1a1a;">23</span>
<span class="t" style="left:812.4px;top:179.3px;font-size:11.6px;line-height:15px;color:#1a1a1a;letter-spacing:0.19px;">00004</span>
<span class="t" style="left:902.4px;top:179.3px;font-size:11.6px;line-height:15px;color:#1a1a1a;">Устройство буронабивных свай</span>
<span class="t" style="left:1257px;top:179.3px;font-size:11.6px;line-height:15px;color:#1a1a1a;">шт</span>
<span class="t" style="left:1392.52px;top:179.3px;font-size:11.6px;line-height:15px;color:#1a1a1a;">25 760</span>
<span class="t" style="left:1502.17px;top:179.3px;font-size:11.6px;line-height:15px;color:#1a1a1a;">0.5</span>
<span class="t" style="left:1601.75px;top:179.3px;font-size:11.6px;line-height:15px;color:#1a1a1a;">6</span>
<span class="t" style="left:1691.75px;top:179.3px;font-size:11.6px;line-height:15px;color:#1a1a1a;">3</span>
<span class="t" style="left:4.17px;top:202.2px;font-size:9.3px;line-height:12px;color:#222;">11</span>
<div class="a" style="left:18.8px;top:198px;width:9.2px;height:19.9px;background:#17365c;"></div>
<div class="a" style="left:27.85px;top:198px;width:9.2px;height:19.9px;background:#1c477c;"></div>
<div class="a" style="left:36.9px;top:198px;width:9.2px;height:19.9px;background:#20579a;"></div>
<div class="a" style="left:45.95px;top:198px;width:9.2px;height:19.9px;background:#2767b7;"></div>
<div class="a" style="left:55px;top:217px;width:1647.6px;height:1px;background:repeating-linear-gradient(90deg,#bdbdc3 0 3.600px,transparent 3.600px 6px)"></div>
<div class="a" style="left:56.95px;top:202.6px;width:10.6px;height:10.6px;background:#fff;border:1px solid #2a2a2a;border-radius:1.500px;box-sizing:border-box"></div>
<span class="t" style="left:77.45px;top:199.1px;font-size:11.6px;line-height:15px;color:#1a1a1a;letter-spacing:-0.29px;">02.01.03</span>
<span class="t" style="left:191.4px;top:199.1px;font-size:11.6px;line-height:15px;color:#1a1a1a;">Устройство буронабивных свай захватка 3</span>
<span class="t" style="left:512.2px;top:199.1px;font-size:11.6px;line-height:15px;color:#1a1a1a;letter-spacing:-0.09px;">10.05.2025 09:00</span>
<span class="t" style="left:618px;top:199.1px;font-size:11.6px;line-height:15px;color:#1a1a1a;letter-spacing:-0.13px;">11.05.2025 18:00</span>
<span class="t" style="left:792.1px;top:199.1px;font-size:11.6px;line-height:15px;color:#1a1a1a;">87</span>
<span class="t" style="left:812.4px;top:199.1px;font-size:11.6px;line-height:15px;color:#1a1a1a;letter-spacing:0.19px;">00004</span>
<span class="t" style="left:902.4px;top:199.1px;font-size:11.6px;line-height:15px;color:#1a1a1a;">Устройство буронабивных свай</span>
<span class="t" style="left:1257px;top:199.1px;font-size:11.6px;line-height:15px;color:#1a1a1a;">шт</span>
<span class="t" style="left:1392.52px;top:199.1px;font-size:11.6px;line-height:15px;color:#1a1a1a;">25 760</span>
<span class="t" style="left:1502.17px;top:199.1px;font-size:11.6px;line-height:15px;color:#1a1a1a;">0.5</span>
<span class="t" style="left:1601.75px;top:199.1px;font-size:11.6px;line-height:15px;color:#1a1a1a;">6</span>
<span class="t" style="left:1691.75px;top:199.1px;font-size:11.6px;line-height:15px;color:#1a1a1a;">3</span>
<span class="t" style="left:3.83px;top:222px;font-size:9.3px;line-height:12px;color:#222;">12</span>
<div class="a" style="left:18.8px;top:217.8px;width:9.2px;height:19.9px;background:#17365c;"></div>
<div class="a" style="left:27.85px;top:217.8px;width:9.2px;height:19.9px;background:#1c477c;"></div>
<div class="a" style="left:36.9px;top:217.8px;width:9.2px;height:19.9px;background:#20579a;"></div>
<div class="a" style="left:45.95px;top:217.8px;width:9.2px;height:19.9px;background:#2767b7;"></div>
<div class="a" style="left:55px;top:236.8px;width:1647.6px;height:1px;background:repeating-linear-gradient(90deg,#bdbdc3 0 3.600px,transparent 3.600px 6px)"></div>
<div class="a" style="left:56.95px;top:222.4px;width:10.6px;height:10.6px;background:#fff;border:1px solid #2a2a2a;border-radius:1.500px;box-sizing:border-box"></div>
<span class="t" style="left:77.45px;top:218.9px;font-size:11.6px;line-height:15px;color:#1a1a1a;letter-spacing:-0.29px;">02.01.04</span>
<span class="t" style="left:191.4px;top:218.9px;font-size:11.6px;line-height:15px;color:#1a1a1a;">Устройство буронабивных свай захватка 4</span>
<span class="t" style="left:512.2px;top:218.9px;font-size:11.6px;line-height:15px;color:#1a1a1a;letter-spacing:-0.09px;">12.05.2025 09:00</span>
<span class="t" style="left:618px;top:218.9px;font-size:11.6px;line-height:15px;color:#1a1a1a;letter-spacing:-0.19px;">13.05.2025 18:00</span>
<span class="t" style="left:792.1px;top:218.9px;font-size:11.6px;line-height:15px;color:#1a1a1a;">61</span>
<span class="t" style="left:812.4px;top:218.9px;font-size:11.6px;line-height:15px;color:#1a1a1a;letter-spacing:0.19px;">00004</span>
<span class="t" style="left:902.4px;top:218.9px;font-size:11.6px;line-height:15px;color:#1a1a1a;">Устройство буронабивных свай</span>
<span class="t" style="left:1257px;top:218.9px;font-size:11.6px;line-height:15px;color:#1a1a1a;">шт</span>
<span class="t" style="left:1392.52px;top:218.9px;font-size:11.6px;line-height:15px;color:#1a1a1a;">25 760</span>
<span class="t" style="left:1502.17px;top:218.9px;font-size:11.6px;line-height:15px;color:#1a1a1a;">0.5</span>
<span class="t" style="left:1601.75px;top:218.9px;font-size:11.6px;line-height:15px;color:#1a1a1a;">6</span>
<span class="t" style="left:1691.75px;top:218.9px;font-size:11.6px;line-height:15px;color:#1a1a1a;">3</span>
<span class="t" style="left:3.83px;top:241.8px;font-size:9.3px;line-height:12px;color:#222;">13</span>
<div class="a" style="left:18.8px;top:237.6px;width:9.2px;height:19.9px;background:#17365c;"></div>
<div class="a" style="left:27.85px;top:237.6px;width:9.2px;height:19.9px;background:#1c477c;"></div>
<div class="a" style="left:36.9px;top:237.6px;width:9.2px;height:19.9px;background:#20579a;"></div>
<div class="a" style="left:45.95px;top:237.6px;width:9.2px;height:19.9px;background:#2767b7;"></div>
<div class="a" style="left:55px;top:256.6px;width:1647.6px;height:1px;background:repeating-linear-gradient(90deg,#bdbdc3 0 3.600px,transparent 3.600px 6px)"></div>
<div class="a" style="left:56.95px;top:242.2px;width:10.6px;height:10.6px;background:#fff;border:1px solid #2a2a2a;border-radius:1.500px;box-sizing:border-box"></div>
<span class="t" style="left:77.45px;top:238.7px;font-size:11.6px;line-height:15px;color:#1a1a1a;letter-spacing:-0.29px;">02.01.05</span>
<span class="t" style="left:191.4px;top:238.7px;font-size:11.6px;line-height:15px;color:#1a1a1a;">Устройство фундаментной плиты</span>
<span class="t" style="left:512.2px;top:238.7px;font-size:11.6px;line-height:15px;color:#1a1a1a;letter-spacing:-0.09px;">14.05.2025 09:00</span>
<span class="t" style="left:618px;top:238.7px;font-size:11.6px;line-height:15px;color:#1a1a1a;letter-spacing:-0.19px;">18.05.2025 18:00</span>
<span class="t" style="left:792.1px;top:238.7px;font-size:11.6px;line-height:15px;color:#1a1a1a;">12</span>
<span class="t" style="left:812.4px;top:238.7px;font-size:11.6px;line-height:15px;color:#1a1a1a;letter-spacing:0.19px;">00005</span>
<span class="t" style="left:902.4px;top:238.7px;font-size:11.6px;line-height:15px;color:#1a1a1a;">Устройство фундаментной плиты</span>
<span class="t" style="left:1257px;top:238.7px;font-size:11.6px;line-height:15px;color:#1a1a1a;">м3</span>
<span class="t" style="left:1398.97px;top:238.7px;font-size:11.6px;line-height:15px;color:#1a1a1a;">8 660</span>
<span class="t" style="left:1495.72px;top:238.7px;font-size:11.6px;line-height:15px;color:#1a1a1a;">1.79</span>
<span class="t" style="left:1592.07px;top:238.7px;font-size:11.6px;line-height:15px;color:#1a1a1a;">2.8</span>
<span class="t" style="left:1691.75px;top:238.7px;font-size:11.6px;line-height:15px;color:#1a1a1a;">5</span>
<span class="t" style="left:3.83px;top:261.6px;font-size:9.3px;line-height:12px;color:#222;">14</span>
<div class="a" style="left:18.8px;top:257.4px;width:9.2px;height:19.9px;background:#17365c;"></div>
<div class="a" style="left:27.85px;top:257.4px;width:9.2px;height:19.9px;background:#1c477c;"></div>
<div class="a" style="left:36.9px;top:257.4px;width:9.2px;height:19.9px;background:#20579a;"></div>
<div class="a" style="left:45.95px;top:257.4px;width:1656.65px;height:19.9px;background:#2767b7;"></div>
<div class="a" style="left:46.35px;top:266.2px;width:9.5px;height:2px;background:#fff;"></div>
<div class="a" style="left:56.95px;top:262.7px;width:10.6px;height:10.6px;border:1px solid #eef2f8;border-radius:1.500px;box-sizing:border-box"></div>
<span class="t" style="left:76.95px;top:260.3px;font-size:11.2px;line-height:15px;color:#fff;font-weight:700;letter-spacing:-0.48px;-webkit-text-stroke:.25px #fff;">OP_syn.1.1.2.1.2.02</span>
<span class="t" style="left:191.4px;top:260.3px;font-size:11.2px;line-height:15px;color:#fff;font-weight:700;letter-spacing:-0.37px;-webkit-text-stroke:.25px #fff;">Монолитные работы подземной части</span>
<span class="t" style="left:512.2px;top:260.3px;font-size:11.2px;line-height:15px;color:#fff;font-weight:700;letter-spacing:0.11px;-webkit-text-stroke:.25px #fff;">19.05.2025 09:00</span>
<span class="t" style="left:618px;top:260.3px;font-size:11.2px;line-height:15px;color:#fff;font-weight:700;letter-spacing:0.05px;-webkit-text-stroke:.25px #fff;">29.05.2025 18:00</span>
<span class="t" style="left:798.77px;top:260.3px;font-size:11.2px;line-height:15px;color:#fff;font-weight:700;-webkit-text-stroke:.25px #fff;">0</span>
<span class="t" style="left:3.83px;top:281.4px;font-size:9.3px;line-height:12px;color:#222;">15</span>
<div class="a" style="left:18.8px;top:277.2px;width:9.2px;height:19.9px;background:#17365c;"></div>
<div class="a" style="left:27.85px;top:277.2px;width:9.2px;height:19.9px;background:#1c477c;"></div>
<div class="a" style="left:36.9px;top:277.2px;width:9.2px;height:19.9px;background:#20579a;"></div>
<div class="a" style="left:45.95px;top:277.2px;width:9.2px;height:19.9px;background:#2767b7;"></div>
<div class="a" style="left:55px;top:296.2px;width:1647.6px;height:1px;background:repeating-linear-gradient(90deg,#bdbdc3 0 3.600px,transparent 3.600px 6px)"></div>
<div class="a" style="left:56.95px;top:281.8px;width:10.6px;height:10.6px;background:#fff;border:1px solid #2a2a2a;border-radius:1.500px;box-sizing:border-box"></div>
<span class="t" style="left:77.45px;top:278.3px;font-size:11.6px;line-height:15px;color:#1a1a1a;letter-spacing:-0.29px;">02.02.01</span>
<span class="t" style="left:191.4px;top:278.3px;font-size:11.6px;line-height:15px;color:#1a1a1a;">Устройство монолитных стен цокольного этажа</span>
<span class="t" style="left:512.2px;top:278.3px;font-size:11.6px;line-height:15px;color:#1a1a1a;letter-spacing:-0.09px;">19.05.2025 09:00</span>
<span class="t" style="left:618px;top:278.3px;font-size:11.6px;line-height:15px;color:#1a1a1a;letter-spacing:-0.19px;">20.05.2025 18:00</span>
<span class="t" style="left:792.1px;top:278.3px;font-size:11.6px;line-height:15px;color:#1a1a1a;">44</span>
<span class="t" style="left:812.4px;top:278.3px;font-size:11.6px;line-height:15px;color:#1a1a1a;letter-spacing:0.19px;">00006</span>
<span class="t" style="left:902.4px;top:278.3px;font-size:11.6px;line-height:15px;color:#1a1a1a;">Устройство монолитных стен</span>
<span class="t" style="left:1257px;top:278.3px;font-size:11.6px;line-height:15px;color:#1a1a1a;">м3</span>
<span class="t" style="left:1393.38px;top:278.3px;font-size:11.6px;line-height:15px;color:#1a1a1a;">11 045</span>
<span class="t" style="left:1495.72px;top:278.3px;font-size:11.6px;line-height:15px;color:#1a1a1a;">1.72</span>
<span class="t" style="left:1592.07px;top:278.3px;font-size:11.6px;line-height:15px;color:#1a1a1a;">2.9</span>
<span class="t" style="left:1691.75px;top:278.3px;font-size:11.6px;line-height:15px;color:#1a1a1a;">5</span>
<span class="t" style="left:3.83px;top:301.2px;font-size:9.3px;line-height:12px;color:#222;">16</span>
<div class="a" style="left:18.8px;top:297px;width:9.2px;height:19.9px;background:#17365c;"></div>
<div class="a" style="left:27.85px;top:297px;width:9.2px;height:19.9px;background:#1c477c;"></div>
<div class="a" style="left:36.9px;top:297px;width:9.2px;height:19.9px;background:#20579a;"></div>
<div class="a" style="left:45.95px;top:297px;width:9.2px;height:19.9px;background:#2767b7;"></div>
<div class="a" style="left:55px;top:316px;width:1647.6px;height:1px;background:repeating-linear-gradient(90deg,#bdbdc3 0 3.600px,transparent 3.600px 6px)"></div>
<div class="a" style="left:56.95px;top:301.6px;width:10.6px;height:10.6px;background:#fff;border:1px solid #2a2a2a;border-radius:1.500px;box-sizing:border-box"></div>
<span class="t" style="left:77.45px;top:298.1px;font-size:11.6px;line-height:15px;color:#1a1a1a;letter-spacing:-0.29px;">02.02.02</span>
<span class="t" style="left:191.4px;top:298.1px;font-size:11.6px;line-height:15px;color:#1a1a1a;">Устройство монолитного перекрытия цокольного этажа</span>
<span class="t" style="left:512.2px;top:298.1px;font-size:11.6px;line-height:15px;color:#1a1a1a;letter-spacing:-0.09px;">21.05.2025 09:00</span>
<span class="t" style="left:618px;top:298.1px;font-size:11.6px;line-height:15px;color:#1a1a1a;letter-spacing:-0.19px;">25.05.2025 18:00</span>
<span class="t" style="left:792.1px;top:298.1px;font-size:11.6px;line-height:15px;color:#1a1a1a;">24</span>
<span class="t" style="left:812.4px;top:298.1px;font-size:11.6px;line-height:15px;color:#1a1a1a;letter-spacing:0.19px;">00007</span>
<span class="t" style="left:902.4px;top:298.1px;font-size:11.6px;line-height:15px;color:#1a1a1a;">Устройство монолитного перекрытия</span>
<span class="t" style="left:1257px;top:298.1px;font-size:11.6px;line-height:15px;color:#1a1a1a;">м3</span>
<span class="t" style="left:1392.52px;top:298.1px;font-size:11.6px;line-height:15px;color:#1a1a1a;">10 070</span>
<span class="t" style="left:1511.85px;top:298.1px;font-size:11.6px;line-height:15px;color:#1a1a1a;">0</span>
<span class="t" style="left:1585.62px;top:298.1px;font-size:11.6px;line-height:15px;color:#1a1a1a;">2.85</span>
<span class="t" style="left:1691.75px;top:298.1px;font-size:11.6px;line-height:15px;color:#1a1a1a;">5</span>
<span class="t" style="left:3.83px;top:321px;font-size:9.3px;line-height:12px;color:#222;">17</span>
<div class="a" style="left:18.8px;top:316.8px;width:9.2px;height:19.9px;background:#17365c;"></div>
<div class="a" style="left:27.85px;top:316.8px;width:9.2px;height:19.9px;background:#1c477c;"></div>
<div class="a" style="left:36.9px;top:316.8px;width:9.2px;height:19.9px;background:#20579a;"></div>
<div class="a" style="left:45.95px;top:316.8px;width:9.2px;height:19.9px;background:#2767b7;"></div>
<div class="a" style="left:55px;top:335.8px;width:1647.6px;height:1px;background:repeating-linear-gradient(90deg,#bdbdc3 0 3.600px,transparent 3.600px 6px)"></div>
<div class="a" style="left:56.95px;top:321.4px;width:10.6px;height:10.6px;background:#fff;border:1px solid #2a2a2a;border-radius:1.500px;box-sizing:border-box"></div>
<span class="t" style="left:77.45px;top:317.9px;font-size:11.6px;line-height:15px;color:#1a1a1a;letter-spacing:-0.29px;">02.02.03</span>
<span class="t" style="left:191.4px;top:317.9px;font-size:11.6px;line-height:15px;color:#1a1a1a;">Устройство монолитной входной лестницы</span>
<span class="t" style="left:512.2px;top:317.9px;font-size:11.6px;line-height:15px;color:#1a1a1a;letter-spacing:-0.09px;">28.05.2025 09:00</span>
<span class="t" style="left:618px;top:317.9px;font-size:11.6px;line-height:15px;color:#1a1a1a;letter-spacing:-0.19px;">29.05.2025 18:00</span>
<span class="t" style="left:792.1px;top:317.9px;font-size:11.6px;line-height:15px;color:#1a1a1a;">86</span>
<span class="t" style="left:812.4px;top:317.9px;font-size:11.6px;line-height:15px;color:#1a1a1a;letter-spacing:0.19px;">00008</span>
<span class="t" style="left:902.4px;top:317.9px;font-size:11.6px;line-height:15px;color:#1a1a1a;">Устройство монолитной лестницы</span>
<span class="t" style="left:1257px;top:317.9px;font-size:11.6px;line-height:15px;color:#1a1a1a;">м3</span>
<span class="t" style="left:1398.97px;top:317.9px;font-size:11.6px;line-height:15px;color:#1a1a1a;">9 824</span>
<span class="t" style="left:1502.17px;top:317.9px;font-size:11.6px;line-height:15px;color:#1a1a1a;">0.5</span>
<span class="t" style="left:1595.3px;top:317.9px;font-size:11.6px;line-height:15px;color:#1a1a1a;">10</span>
<span class="t" style="left:1691.75px;top:317.9px;font-size:11.6px;line-height:15px;color:#1a1a1a;">5</span>
<span class="t" style="left:3.83px;top:340.8px;font-size:9.3px;line-height:12px;color:#222;">18</span>
<div class="a" style="left:18.8px;top:336.6px;width:9.2px;height:19.9px;background:#17365c;"></div>
<div class="a" style="left:27.85px;top:336.6px;width:9.2px;height:19.9px;background:#1c477c;"></div>
<div class="a" style="left:36.9px;top:336.6px;width:9.2px;height:19.9px;background:#20579a;"></div>
<div class="a" style="left:45.95px;top:336.6px;width:1656.65px;height:19.9px;background:#2767b7;"></div>
<div class="a" style="left:46.35px;top:346.2px;width:9.5px;height:2px;background:#fff;"></div>
<div class="a" style="left:56.95px;top:341.9px;width:10.6px;height:10.6px;border:1px solid #eef2f8;border-radius:1.500px;box-sizing:border-box"></div>
<span class="t" style="left:76.95px;top:339.5px;font-size:11.2px;line-height:15px;color:#fff;font-weight:700;letter-spacing:-0.48px;-webkit-text-stroke:.25px #fff;">OP_syn.1.1.2.1.2.03</span>
<span class="t" style="left:191.4px;top:339.5px;font-size:11.2px;line-height:15px;color:#fff;font-weight:700;letter-spacing:-0.37px;-webkit-text-stroke:.25px #fff;">Монолитные работы надземной части</span>
<span class="t" style="left:512.2px;top:339.5px;font-size:11.2px;line-height:15px;color:#fff;font-weight:700;letter-spacing:0.11px;-webkit-text-stroke:.25px #fff;">30.05.2025 09:00</span>
<span class="t" style="left:618px;top:339.5px;font-size:11.2px;line-height:15px;color:#fff;font-weight:700;letter-spacing:0.05px;-webkit-text-stroke:.25px #fff;">21.06.2025 18:00</span>
<span class="t" style="left:798.77px;top:339.5px;font-size:11.2px;line-height:15px;color:#fff;font-weight:700;-webkit-text-stroke:.25px #fff;">0</span>
<div class="a" style="left:187.2px;top:0;width:1px;height:346px;background:rgba(255,255,255,.13)"></div>
<div class="a" style="left:503.1px;top:0;width:1px;height:346px;background:rgba(255,255,255,.13)"></div>
<div class="a" style="left:608.8px;top:0;width:1px;height:346px;background:rgba(255,255,255,.13)"></div>
<div class="a" style="left:714.1px;top:0;width:1px;height:346px;background:rgba(255,255,255,.13)"></div>
<div class="a" style="left:808.1px;top:0;width:1px;height:346px;background:rgba(255,255,255,.13)"></div>
<div class="a" style="left:897.9px;top:0;width:1px;height:346px;background:rgba(255,255,255,.13)"></div>
<div class="a" style="left:1252.1px;top:0;width:1px;height:346px;background:rgba(255,255,255,.13)"></div>
<div class="a" style="left:1342.1px;top:0;width:1px;height:346px;background:rgba(255,255,255,.13)"></div>
<div class="a" style="left:1432.1px;top:0;width:1px;height:346px;background:rgba(255,255,255,.13)"></div>
<div class="a" style="left:1522.1px;top:0;width:1px;height:346px;background:rgba(255,255,255,.13)"></div>
<div class="a" style="left:1612.1px;top:0;width:1px;height:346px;background:rgba(255,255,255,.13)"></div>
<div class="a" style="left:1702.1px;top:0;width:1px;height:346px;background:rgba(255,255,255,.13)"></div>
</div>
<div class="a" style="left:41px;top:472px;width:1877px;height:5px;background:#b3b3bb;"></div>
<div class="a" style="left:41px;top:477px;width:1877px;height:435px;background:#fff;"></div>
<span class="t" style="left:95px;top:488px;font-size:14.2px;line-height:18px;color:#1976d2;letter-spacing:0.81px;">Карточка работы</span>
<span class="t" style="left:328px;top:488px;font-size:14.2px;line-height:18px;color:#3a3a40;letter-spacing:0.78px;">Связи работы</span>
<span class="t" style="left:537px;top:488px;font-size:14.2px;line-height:18px;color:#3a3a40;letter-spacing:0.8px;">Связанные графики</span>
<span class="t" style="left:791px;top:488px;font-size:14.2px;line-height:18px;color:#3a3a40;letter-spacing:1.05px;">Справочники</span>
<span class="t" style="left:997px;top:488px;font-size:14.2px;line-height:18px;color:#3a3a40;letter-spacing:0.79px;">Суточное планирование</span>
<span class="t" style="left:1282px;top:488px;font-size:14.2px;line-height:18px;color:#3a3a40;letter-spacing:0.98px;">Фото / Документация</span>
<span class="t" style="left:1548px;top:488px;font-size:14.2px;line-height:18px;color:#3a3a40;letter-spacing:0.82px;">Запросы и поручения</span>
<span class="t" style="left:1814px;top:488px;font-size:14.2px;line-height:18px;color:#3a3a40;letter-spacing:0.49px;">Табели</span>
<div class="a" style="left:41px;top:515px;width:231.8px;height:2px;background:#1976d2;"></div>
<div class="a" style="left:978px;top:524px;width:2px;height:388px;background:#c9c9ce;"></div>
<span class="t" style="left:55px;top:533.7px;font-size:12.6px;line-height:16px;color:#111;font-weight:700;letter-spacing:-0.29px;">Тип</span>
<span class="t" style="left:55px;top:560.6px;font-size:12.6px;line-height:16px;color:#111;font-weight:700;letter-spacing:-0.71px;">Шифр</span>
<span class="t" style="left:55px;top:587.6px;font-size:12.6px;line-height:16px;color:#111;font-weight:700;letter-spacing:-0.09px;">Статус</span>
<div class="a" style="left:114px;top:531px;width:164.8px;height:20.2px;background:#fff;border:1px solid #bdbdc4;border-radius:3.2px;box-sizing:border-box;"></div>
<span class="t" style="left:125.5px;top:533.9px;font-size:12.6px;line-height:16px;color:#111;letter-spacing:0.68px;">Работа</span>
<svg class="a" style="left:252.8px;top:538.1px" width="9" height="5" viewBox="0 0 9 5"><path d="M0.200 0.200h8.600L4.500 4.800z" fill="#3c3c42"/></svg>
<div class="a" style="left:114px;top:558px;width:164.8px;height:20.2px;background:#fff;border:1px solid #bdbdc4;border-radius:3.2px;box-sizing:border-box;"></div>
<span class="t" style="left:125.5px;top:560px;font-size:12.6px;line-height:16px;color:#111;letter-spacing:0.24px;">01.01</span>
<div class="a" style="left:114px;top:585px;width:164.8px;height:20.2px;background:#fff;border:1px solid #bdbdc4;border-radius:3.2px;box-sizing:border-box;"></div>
<span class="t" style="left:125.5px;top:587px;font-size:12.6px;line-height:16px;color:#111;letter-spacing:0.6px;">Не начата</span>
<svg class="a" style="left:252.8px;top:591.9px" width="9" height="5" viewBox="0 0 9 5"><path d="M0.200 0.200h8.600L4.500 4.800z" fill="#3c3c42"/></svg>
<div class="a" style="left:286px;top:531px;width:531.5px;height:45px;background:#fff;border:1px solid #bdbdc4;border-radius:3.2px;box-sizing:border-box;"></div>
<span class="t" style="left:296.7px;top:539.7px;font-size:16.2px;line-height:21px;color:#111;font-weight:700;letter-spacing:0.1px;">Вертикальная планировка территории</span>
<span class="t" style="left:286px;top:586.2px;font-size:12.6px;line-height:16px;color:#222;letter-spacing:0.54px;">Сценарий</span>
<div class="a" style="left:351.7px;top:582.7px;width:465.8px;height:20px;background:#efeff2;border-radius:3px;"></div>
<span class="t" style="left:476.55px;top:584.7px;font-size:11.4px;line-height:15px;color:#222;letter-spacing:0.49px;">Сценария нет</span>
<svg class="a" style="left:798px;top:585.500px" width="15" height="15" viewBox="0 0 15 15" fill="none" stroke="#222" stroke-width="1.100" stroke-linejoin="round"><path d="M7.500 1l1.700 1.100 2-.2.700 1.900 1.700 1.100-.5 2 .5 2-1.700 1.100-.7 1.900-2-.2L7.500 13.800l-1.700-1.100-2 .2-.7-1.900L1.400 9.900l.5-2-.5-2 1.700-1.100.7-1.900 2 .2z"/><path d="M5 5.300l2.200 2.200L5 9.700M8 5.300l2.200 2.200L8 9.700" stroke-width="1"/></svg>
<div class="a" style="left:824.6px;top:531px;width:147.2px;height:74px;background:#fff;border:1.300px solid #4a94dc;border-radius:4.5px;box-sizing:border-box;"></div>
<div class="a" style="left:824.6px;top:531px;width:147.2px;height:30.8px;background:#1976d2;border-radius:4.5px;border-bottom-left-radius:0;border-bottom-right-radius:0;"></div>
<div class="a" style="left:856.2px;top:524.2px;width:9.2px;height:13px;background:#fff;border:1.500px solid #1976d2;border-radius:2.6px;box-sizing:border-box;"></div>
<div class="a" style="left:929.8px;top:524.2px;width:9.2px;height:13px;background:#fff;border:1.500px solid #1976d2;border-radius:2.6px;box-sizing:border-box;"></div>
<span class="t" style="left:854px;top:538px;font-size:11.6px;line-height:15px;color:#fff;letter-spacing:0.25px;text-decoration:underline;">PLAN-R: 7 дней</span>
<svg class="a" style="left:839.500px;top:567.500px" width="16" height="16" viewBox="0 0 16 16" fill="none" stroke="#555" stroke-width="1.100" stroke-linecap="round"><circle cx="3.200" cy="3.200" r="1.900"/><path d="M4.600 4.600l4 4"/><rect x="7.300" y="8.300" width="7.400" height="4.400" rx="2.200" transform="rotate(45 11 10.500)"/></svg>
<div class="a" style="left:861.7px;top:565.3px;width:72.8px;height:19.6px;background:#fff;border:1px solid #bdbdc4;border-radius:3.2px;box-sizing:border-box;"></div>
<span class="t" style="left:890.2px;top:567.9px;font-size:12.6px;line-height:16px;color:#111;letter-spacing:0.98px;">24</span>
<span class="t" style="left:941.6px;top:569px;font-size:10.8px;line-height:14px;color:#222;letter-spacing:0.37px;">ч.</span>
<span class="t" style="left:845.5px;top:588.3px;font-size:10.8px;line-height:14px;color:#222;letter-spacing:0.39px;">Календарных: 3 дн.</span>
<div class="a" style="left:48px;top:612.3px;width:923.3px;height:21.6px;background:#21c594;border-radius:2px;"></div>
<span class="t" style="left:64.3px;top:614.1px;font-size:13.2px;line-height:17px;color:#fff;letter-spacing:0.75px;">29.04.2025 09:00</span>
<svg class="a" style="left:183.5px;top:617.2px" width="11" height="11" viewBox="0 0 11 11" fill="none" stroke="#fff" stroke-width="1.200"><rect x="1.200" y="1.800" width="8.400" height="8.200" rx="1.200"/><path d="M1.200 3.500h8.400" stroke-width="2"/><path d="M3.400 .500v1.500M7.400 .500v1.500" stroke-width="1"/></svg>
<span class="t" style="left:508.95px;top:614.6px;font-size:12.6px;line-height:16px;color:#fff;letter-spacing:0.39px;-webkit-text-stroke:.25px #fff;">0 %</span>
<span class="t" style="left:832.6px;top:614.1px;font-size:13.2px;line-height:17px;color:#fff;letter-spacing:0.62px;">01.05.2025 18:00</span>
<svg class="a" style="left:950.3px;top:617.2px" width="11" height="11" viewBox="0 0 11 11" fill="none" stroke="#fff" stroke-width="1.200"><rect x="1.200" y="1.800" width="8.400" height="8.200" rx="1.200"/><path d="M1.200 3.500h8.400" stroke-width="2"/><path d="M3.400 .500v1.500M7.400 .500v1.500" stroke-width="1"/></svg>
<span class="t" style="left:48px;top:647.8px;font-size:12.6px;line-height:16px;color:#111;font-weight:700;letter-spacing:0.09px;">Ограничения</span>
<div class="a" style="left:201.8px;top:654px;width:770.2px;height:3px;background:#b8b8c0;"></div>
<span class="t" style="left:48px;top:672.6px;font-size:12.6px;line-height:16px;color:#222;letter-spacing:0.32px;">Начало</span>
<div class="a" style="left:108.3px;top:670px;width:150.6px;height:19.8px;background:#fff;border:1px solid #bdbdc4;border-radius:3.2px;box-sizing:border-box;"></div>
<svg class="a" style="left:232.8px;top:676.9px" width="9" height="5" viewBox="0 0 9 5"><path d="M0.200 0.200h8.600L4.500 4.800z" fill="#3c3c42"/></svg>
<span class="t" style="left:735.7px;top:672.6px;font-size:12.6px;line-height:16px;color:#222;letter-spacing:0.5px;">Окончание</span>
<div class="a" style="left:818.3px;top:670px;width:150.6px;height:19.8px;background:#fff;border:1px solid #bdbdc4;border-radius:3.2px;box-sizing:border-box;"></div>
<svg class="a" style="left:941.8px;top:676.9px" width="9" height="5" viewBox="0 0 9 5"><path d="M0.200 0.200h8.600L4.500 4.800z" fill="#3c3c42"/></svg>
<div class="a" style="left:48.2px;top:705.2px;width:35.6px;height:17.4px;background:#1976d2;border-radius:3px;box-shadow:0 1.500px 3px rgba(0,0,0,.35);"></div>
<svg class="a" style="left:59px;top:708px" width="14" height="12" viewBox="0 0 14 12" fill="none" stroke="#fff" stroke-width="1.200" stroke-linecap="round" stroke-linejoin="round"><path d="M6.400 1L1.400 6l5 5M12.400 1L7.400 6l5 5"/></svg>
<span class="t" style="left:98.8px;top:705.8px;font-size:12.6px;line-height:16px;color:#222;letter-spacing:0.46px;">Начало как можно раньше</span>
<span class="t" style="left:741.2px;top:705.8px;font-size:12.6px;line-height:16px;color:#222;letter-spacing:0.6px;">Окончание как можно позже</span>
<div class="a" style="left:936.2px;top:705.2px;width:35.6px;height:17.4px;background:#aeaeb2;border-radius:3px;box-shadow:0 1.500px 3px rgba(0,0,0,.3);"></div>
<svg class="a" style="left:947px;top:708px" width="14" height="12" viewBox="0 0 14 12" fill="none" stroke="#e8e8ea" stroke-width="1.200" stroke-linecap="round" stroke-linejoin="round"><path d="M1.600 1l5 5-5 5M7.600 1l5 5-5 5"/></svg>
<span class="t" style="left:48px;top:737px;font-size:12.6px;line-height:16px;color:#111;font-weight:700;letter-spacing:-0.16px;">Физобъем</span>
<div class="a" style="left:202px;top:743px;width:770px;height:3px;background:#b8b8c0;"></div>
<span class="t" style="left:91.7px;top:759.2px;font-size:12.6px;line-height:16px;color:#222;letter-spacing:1.29px;">Код</span>
<span class="t" style="left:238.2px;top:759.2px;font-size:12.6px;line-height:16px;color:#222;letter-spacing:0.42px;">Наименование</span>
<span class="t" style="left:392px;top:759.2px;font-size:12.6px;line-height:16px;color:#222;letter-spacing:0.45px;">Ед. измерения</span>
<span class="t" style="left:510px;top:759.2px;font-size:12.6px;line-height:16px;color:#222;letter-spacing:0.55px;">Расценка</span>
<span class="t" style="left:627px;top:759.2px;font-size:12.6px;line-height:16px;color:#222;letter-spacing:0.6px;">Интенсивность</span>
<span class="t" style="left:744.5px;top:759.2px;font-size:12.6px;line-height:16px;color:#222;letter-spacing:0.44px;">Уд. трудозатраты</span>
<span class="t" style="left:861.7px;top:759.2px;font-size:12.6px;line-height:16px;color:#222;letter-spacing:0.32px;">Численность бр...</span>
<div class="a" style="left:48.2px;top:780px;width:35.6px;height:17.5px;background:#1976d2;border-radius:3px;box-shadow:0 1.500px 3px rgba(0,0,0,.35);"></div>
<svg class="a" style="left:59.500px;top:781.500px" width="14" height="14" viewBox="0 0 14 14" fill="none" stroke="#fff" stroke-width="1.150" stroke-linecap="round" stroke-linejoin="round"><path d="M4.800 2.200C2.200 4.200 1.600 8.200 4.700 11.700"/><path d="M2 11.100L4.800 11.700L5.300 8.900"/><path d="M9.200 11.700C11.800 9.800 12.600 5.600 9.700 2.300"/><path d="M12.400 2.900L9.700 2.300L9.200 5.100"/></svg>
<div class="a" style="left:91.2px;top:778.4px;width:140.1px;height:19.4px;background:#fff;border:1px solid #bdbdc4;border-radius:3.2px;box-sizing:border-box;"></div>
<span class="t" style="left:102.5px;top:779.6px;font-size:12.6px;line-height:16px;color:#111;letter-spacing:0.87px;">00001</span>
<svg class="a" style="left:207.5px;top:781.3px" width="12" height="12" viewBox="0 0 12 12" fill="none" stroke="#85858c" stroke-width=".9"><path d="M3.300 2.800V1.800a.8.800 0 0 1 .8-.8h5.600a.8.800 0 0 1 .8.800v5.600"/><rect x="1.500" y="3.400" width="8" height="7.600" rx=".8" fill="#fff"/><path d="M1.500 5.600h8M4.200 5.600v5.400M6.800 5.600v5.400M1.500 8.300h8" stroke-width=".8"/></svg>
<div class="a" style="left:238.2px;top:778.4px;width:146.8px;height:19.4px;background:#fff;border:1px solid #bdbdc4;border-radius:3.2px;box-sizing:border-box;"></div>
<span class="t" style="left:249.5px;top:779.6px;font-size:12.6px;line-height:16px;color:#111;letter-spacing:0.57px;">Вертикальная ...</span>
<svg class="a" style="left:361.2px;top:781.3px" width="12" height="12" viewBox="0 0 12 12" fill="none" stroke="#85858c" stroke-width=".9"><path d="M3.300 2.800V1.800a.8.800 0 0 1 .8-.8h5.600a.8.800 0 0 1 .8.800v5.600"/><rect x="1.500" y="3.400" width="8" height="7.600" rx=".8" fill="#fff"/><path d="M1.500 5.600h8M4.200 5.600v5.400M6.800 5.600v5.400M1.500 8.300h8" stroke-width=".8"/></svg>
<div class="a" style="left:392px;top:778.4px;width:110.8px;height:19.4px;background:#fff;border:1px solid #bdbdc4;border-radius:3.2px;box-sizing:border-box;"></div>
<span class="t" style="left:403.3px;top:779.6px;font-size:12.6px;line-height:16px;color:#111;letter-spacing:0.83px;">м3</span>
<svg class="a" style="left:479px;top:781.3px" width="12" height="12" viewBox="0 0 12 12" fill="none" stroke="#85858c" stroke-width=".9"><path d="M3.300 2.800V1.800a.8.800 0 0 1 .8-.8h5.600a.8.800 0 0 1 .8.800v5.600"/><rect x="1.500" y="3.400" width="8" height="7.600" rx=".8" fill="#fff"/><path d="M1.500 5.600h8M4.200 5.600v5.400M6.800 5.600v5.400M1.500 8.300h8" stroke-width=".8"/></svg>
<div class="a" style="left:510px;top:778.4px;width:110.1px;height:19.4px;background:#fff;border:1px solid #bdbdc4;border-radius:3.2px;box-sizing:border-box;"></div>
<span class="t" style="left:519.7px;top:779.6px;font-size:12.6px;line-height:16px;color:#111;letter-spacing:0.46px;">110</span>
<div class="a" style="left:627px;top:778.4px;width:110.8px;height:19.4px;background:#fff;border:1px solid #bdbdc4;border-radius:3.2px;box-sizing:border-box;"></div>
<span class="t" style="left:638.3px;top:779.6px;font-size:12.6px;line-height:16px;color:#8a8a90;letter-spacing:0.66px;">62,5</span>
<div class="a" style="left:744.5px;top:778.4px;width:110.1px;height:19.4px;background:#fff;border:1px solid #bdbdc4;border-radius:3.2px;box-sizing:border-box;"></div>
<span class="t" style="left:755.8px;top:779.6px;font-size:12.6px;line-height:16px;color:#111;letter-spacing:0.66px;">0,02</span>
<div class="a" style="left:861.7px;top:778.4px;width:110.8px;height:19.4px;background:#fff;border:1px solid #bdbdc4;border-radius:3.2px;box-sizing:border-box;"></div>
<span class="t" style="left:871.4px;top:779.6px;font-size:12.6px;line-height:16px;color:#111;">1</span>
<span class="t" style="left:48px;top:812px;font-size:12.6px;line-height:16px;color:#111;font-weight:700;letter-spacing:0.26px;">План / Факт</span>
<div class="a" style="left:202px;top:818px;width:770px;height:3px;background:#b8b8c0;"></div>
<span class="t" style="left:394.5px;top:834px;font-size:12.6px;line-height:16px;color:#222;letter-spacing:0.56px;">Физобъем</span>
<span class="t" style="left:628.8px;top:834px;font-size:12.6px;line-height:16px;color:#222;letter-spacing:0.52px;">Трудозатраты</span>
<span class="t" style="left:905.3px;top:834px;font-size:12.6px;line-height:16px;color:#222;letter-spacing:0.43px;">Стоимость</span>
<span class="t" style="left:104px;top:854.6px;font-size:12.6px;line-height:16px;color:#222;letter-spacing:0.56px;">Запланировано</span>
<span class="t" style="left:131px;top:877.6px;font-size:12.6px;line-height:16px;color:#222;letter-spacing:0.59px;">Выполнено</span>
<div class="a" style="left:272px;top:853.2px;width:186.2px;height:18.8px;background:#fff;border:1px solid #bdbdc4;border-radius:3.2px;box-sizing:border-box;"></div>
<div class="a" style="left:529.2px;top:853.2px;width:186px;height:18.8px;background:#fff;border:1px solid #bdbdc4;border-radius:3.2px;box-sizing:border-box;"></div>
<div class="a" style="left:785.7px;top:853.2px;width:186.2px;height:18.8px;background:#fff;border:1px solid #bdbdc4;border-radius:3.2px;box-sizing:border-box;"></div>
<div class="a" style="left:272px;top:876.4px;width:186.2px;height:18.8px;background:#fff;border:1px solid #bdbdc4;border-radius:3.2px;box-sizing:border-box;"></div>
<div class="a" style="left:529.2px;top:876.4px;width:186px;height:18.8px;background:#fff;border:1px solid #bdbdc4;border-radius:3.2px;box-sizing:border-box;"></div>
<div class="a" style="left:785.7px;top:876.4px;width:186.2px;height:18.8px;background:#fff;border:1px solid #bdbdc4;border-radius:3.2px;box-sizing:border-box;"></div>
<span class="t" style="left:424.1px;top:854.4px;font-size:12.6px;line-height:16px;color:#222;letter-spacing:1.24px;">602</span>
<span class="t" style="left:681.8px;top:854.4px;font-size:12.6px;line-height:16px;color:#222;letter-spacing:0.74px;">120</span>
<span class="t" style="left:921.8px;top:854.4px;font-size:12.6px;line-height:16px;color:#222;letter-spacing:0.87px;">66220</span>
<span class="t" style="left:424.1px;top:877.6px;font-size:12.6px;line-height:16px;color:#222;letter-spacing:1.24px;">602</span>
<span class="t" style="left:681.8px;top:877.6px;font-size:12.6px;line-height:16px;color:#222;letter-spacing:0.74px;">120</span>
<span class="t" style="left:921.8px;top:877.6px;font-size:12.6px;line-height:16px;color:#222;letter-spacing:0.87px;">66220</span>
<svg class="a" style="left:205px;top:845px" width="70" height="60" viewBox="0 0 1064 912" fill="#bebebe"><circle cx="495" cy="203" r="54"/><path fill-rule="evenodd" d="M275 262H420L488 318L540 505L650 562L612 606L215 400Q188 380 204 356ZM262 357L312 305H352L300 377ZM410 435L453 393L472 467Z"/><path d="M262 455L410 537L425 700Q425 718 401 718Q380 718 378 700L368 560L295 525L235 700Q225 725 200 715Q180 705 188 685Z"/><path d="M488 722L545 612L600 606L672 490Q690 470 708 490L808 722Z"/></svg>
<svg class="a" style="left:460px;top:845px" width="70" height="60" viewBox="0 0 1064 912" fill="none" stroke="#bebebe"><path d="M370 300C370 230 395 185 428 165L470 225H545L590 165C625 185 650 230 650 300Z" fill="#bebebe" stroke="none"/><rect x="470" y="125" width="75" height="120" rx="30" fill="#bebebe" stroke="none"/><path d="M347 299H670" stroke-width="43" stroke-linecap="round"/><path d="M393 320A115 115 0 0 0 623 320" stroke-width="50"/><path d="M272 742V720A170 170 0 0 1 442 550H578A170 170 0 0 1 748 720V742" stroke-width="50"/></svg>
<svg class="a" style="left:715px;top:845px" width="70" height="60" viewBox="0 0 1064 912" fill="#fff" stroke="#bebebe" stroke-width="41"><path d="M405 235V420A145 62 0 0 0 695 420V235"/><path d="M405 375A145 62 0 0 0 695 375" fill="none"/><path d="M405 305A145 62 0 0 0 695 305" fill="none"/><ellipse cx="550" cy="233" rx="145" ry="62"/><path d="M535 437V632A147 64 0 0 0 829 632V437"/><path d="M535 532A147 64 0 0 0 829 532" fill="none"/><ellipse cx="682" cy="437" rx="147" ry="64"/><path d="M245 533V638A145 62 0 0 0 535 638V533"/><ellipse cx="390" cy="533" rx="145" ry="62"/></svg>
<span class="t" style="left:987.3px;top:541.8px;font-size:12.6px;line-height:16px;color:#111;font-weight:700;letter-spacing:-0.47px;">Атрибуты</span>
<div class="a" style="left:1068.4px;top:531.2px;width:843.3px;height:35.4px;background:#fff;border:1px solid #bdbdc4;border-radius:3.5px;box-sizing:border-box;"></div>
<span class="t" style="left:1079.3px;top:539.6px;font-size:12.6px;line-height:16px;color:#77777d;letter-spacing:0.9px;">Поиск</span>
<span class="t" style="left:987px;top:585.3px;font-size:12.6px;line-height:16px;color:#222;letter-spacing:0.35px;">Шифр</span>
<span class="t" style="left:1453px;top:584.7px;font-size:12.6px;line-height:16px;color:#111;letter-spacing:0.12px;">01.01</span>
<div class="a" style="left:983.5px;top:612px;width:931.5px;height:1px;background:#a9a9ae;"></div>
<span class="t" style="left:987px;top:623.2px;font-size:12.6px;line-height:16px;color:#222;letter-spacing:0.42px;">Наименование</span>
<span class="t" style="left:1453px;top:622.6px;font-size:12.6px;line-height:16px;color:#111;letter-spacing:0.62px;">Вертикальная планировка территории</span>
<div class="a" style="left:983.5px;top:649.6px;width:931.5px;height:1px;background:#a9a9ae;"></div>
<span class="t" style="left:987px;top:660.6px;font-size:12.6px;line-height:16px;color:#222;letter-spacing:0.44px;">Старт</span>
<span class="t" style="left:1453px;top:660px;font-size:12.6px;line-height:16px;color:#111;letter-spacing:0.49px;">29.04.2025 09:00</span>
<div class="a" style="left:983.5px;top:686.8px;width:931.5px;height:1px;background:#a9a9ae;"></div>
<span class="t" style="left:987px;top:698.1px;font-size:12.6px;line-height:16px;color:#222;letter-spacing:0.82px;">Финиш</span>
<span class="t" style="left:1453px;top:697.5px;font-size:12.6px;line-height:16px;color:#111;letter-spacing:0.36px;">01.05.2025 18:00</span>
<div class="a" style="left:983.5px;top:724.6px;width:931.5px;height:1px;background:#a9a9ae;"></div>
<span class="t" style="left:987px;top:736.2px;font-size:12.6px;line-height:16px;color:#222;letter-spacing:0.75px;">Прогресс</span>
<span class="t" style="left:1453px;top:735.6px;font-size:12.6px;line-height:16px;color:#111;">0</span>
<div class="a" style="left:983.5px;top:763px;width:931.5px;height:1px;background:#a9a9ae;"></div>
<span class="t" style="left:987px;top:774.4px;font-size:12.6px;line-height:16px;color:#222;letter-spacing:0.48px;">"Дата выдачи РД в производство работ|план"</span>
<span class="t" style="left:1453px;top:775.4px;font-size:11px;line-height:14px;color:#b9b9bf;font-style:italic;letter-spacing:-0.66px;">Пусто</span>
<div class="a" style="left:983.5px;top:800.9px;width:931.5px;height:1px;background:#a9a9ae;"></div>
<span class="t" style="left:987px;top:812.2px;font-size:12.6px;line-height:16px;color:#222;letter-spacing:0.47px;">"Дата выдачи РД в производство работ|факт"</span>
<span class="t" style="left:1453px;top:813.2px;font-size:11px;line-height:14px;color:#b9b9bf;font-style:italic;letter-spacing:-0.66px;">Пусто</span>
<div class="a" style="left:983.5px;top:838.6px;width:931.5px;height:1px;background:#a9a9ae;"></div>
<span class="t" style="left:987px;top:849.8px;font-size:12.6px;line-height:16px;color:#222;letter-spacing:0.44px;">"Дата начала разработки РД|план"</span>
<span class="t" style="left:1453px;top:850.8px;font-size:11px;line-height:14px;color:#b9b9bf;font-style:italic;letter-spacing:-0.66px;">Пусто</span>
<div class="a" style="left:983.5px;top:876.2px;width:931.5px;height:1px;background:#a9a9ae;"></div>
<span class="t" style="left:987px;top:887.6px;font-size:12.6px;line-height:16px;color:#222;letter-spacing:0.42px;">"Дата начала разработки РД|факт"</span>
<span class="t" style="left:1453px;top:888.6px;font-size:11px;line-height:14px;color:#b9b9bf;font-style:italic;letter-spacing:-0.66px;">Пусто</span>
<svg class="a" style="left:0;top:0" width="1918" height="912" viewBox="0 0 1918 912"><path d="M895.7 196.4V137.7" stroke="#000" stroke-width="3.0" fill="none"/><path d="M895.7 128.7l5.700 11.800h-11.400z" fill="#000"/><path d="M1124.6 196.45V137.7" stroke="#000" stroke-width="3.0" fill="none"/><path d="M1124.6 128.7l5.700 11.800h-11.400z" fill="#000"/><path d="M1340.5 195.9V137.9" stroke="#000" stroke-width="3.0" fill="none"/><path d="M1340.5 128.9l5.700 11.800h-11.400z" fill="#000"/><path d="M1433.8 197.6V138.9" stroke="#000" stroke-width="3.0" fill="none"/><path d="M1433.8 129.9l5.700 11.800h-11.400z" fill="#000"/><path d="M1519 195.5V137.2" stroke="#000" stroke-width="3.0" fill="none"/><path d="M1519 128.2l5.700 11.800h-11.400z" fill="#000"/><path d="M1610.8 197.5V138.9" stroke="#000" stroke-width="3.0" fill="none"/><path d="M1610.8 129.9l5.700 11.800h-11.400z" fill="#000"/><path d="M1701.6 197.5V138.9" stroke="#000" stroke-width="3.0" fill="none"/><path d="M1701.6 129.9l5.700 11.800h-11.400z" fill="#000"/><path d="M66.6 867.4V809.3" stroke="#000" stroke-width="3.0" fill="none"/><path d="M66.6 800.3l5.700 11.800h-11.400z" fill="#000"/><path d="M156.8 867.9V809.3" stroke="#000" stroke-width="3.0" fill="none"/><path d="M156.8 800.3l5.700 11.800h-11.400z" fill="#000"/><path d="M310.6 864.4V806" stroke="#000" stroke-width="3.0" fill="none"/><path d="M310.6 797l5.700 11.800h-11.400z" fill="#000"/><path d="M437.7 867.8V809" stroke="#000" stroke-width="3.0" fill="none"/><path d="M437.7 800l5.700 11.800h-11.400z" fill="#000"/><path d="M560.6 865.3V807" stroke="#000" stroke-width="3.0" fill="none"/><path d="M560.6 798l5.700 11.800h-11.400z" fill="#000"/><path d="M676.7 864.4V805.7" stroke="#000" stroke-width="3.0" fill="none"/><path d="M676.7 796.7l5.700 11.800h-11.400z" fill="#000"/><path d="M795.6 867.5V809" stroke="#000" stroke-width="3.0" fill="none"/><path d="M795.6 800l5.700 11.800h-11.400z" fill="#000"/><path d="M911.6 867.5V809.8" stroke="#000" stroke-width="3.0" fill="none"/><path d="M911.6 800.8l5.700 11.800h-11.400z" fill="#000"/><path d="M291.8 498.3H234.7" stroke="#000" stroke-width="3.0" fill="none"/><path d="M225.7 498.3l11.900 -5.850v11.700z" fill="#000"/><path d="M194.6 725.3H137.8" stroke="#000" stroke-width="3.0" fill="none"/><path d="M128.8 725.3l11.900 -5.850v11.700z" fill="#000"/><path d="M169.15 194.5H112.8" stroke="#000" stroke-width="3.0" fill="none"/><path d="M103.8 194.5l11.900 -5.850v11.700z" fill="#000"/><ellipse cx="896.7" cy="214.2" rx="15.8" ry="17.8" fill="#fff" stroke="#000" stroke-width="3.0"/><text x="891.2" y="220.8" font-family="Liberation Sans, sans-serif" font-size="20.8" textLength="10.400" lengthAdjust="spacingAndGlyphs" fill="#000">3</text><ellipse cx="1125.8" cy="214.25" rx="15.8" ry="17.8" fill="#fff" stroke="#000" stroke-width="3.0"/><text x="1120.3" y="220.85" font-family="Liberation Sans, sans-serif" font-size="20.8" textLength="10.400" lengthAdjust="spacingAndGlyphs" fill="#000">4</text><ellipse cx="1341.6" cy="213.7" rx="15.8" ry="17.8" fill="#fff" stroke="#000" stroke-width="3.0"/><text x="1336.1" y="220.3" font-family="Liberation Sans, sans-serif" font-size="20.8" textLength="10.400" lengthAdjust="spacingAndGlyphs" fill="#000">5</text><ellipse cx="1434.6" cy="215.4" rx="15.8" ry="17.8" fill="#fff" stroke="#000" stroke-width="3.0"/><text x="1429.1" y="222" font-family="Liberation Sans, sans-serif" font-size="20.8" textLength="10.400" lengthAdjust="spacingAndGlyphs" fill="#000">6</text><ellipse cx="1519.5" cy="213.3" rx="15.8" ry="17.8" fill="#fff" stroke="#000" stroke-width="3.0"/><text x="1514" y="219.9" font-family="Liberation Sans, sans-serif" font-size="20.8" textLength="10.400" lengthAdjust="spacingAndGlyphs" fill="#000">7</text><ellipse cx="1611.5" cy="215.3" rx="15.8" ry="17.8" fill="#fff" stroke="#000" stroke-width="3.0"/><text x="1606" y="221.9" font-family="Liberation Sans, sans-serif" font-size="20.8" textLength="10.400" lengthAdjust="spacingAndGlyphs" fill="#000">8</text><ellipse cx="1702.4" cy="215.3" rx="15.8" ry="17.8" fill="#fff" stroke="#000" stroke-width="3.0"/><text x="1696.9" y="221.9" font-family="Liberation Sans, sans-serif" font-size="20.8" textLength="10.400" lengthAdjust="spacingAndGlyphs" fill="#000">9</text><ellipse cx="67.5" cy="885.2" rx="15.8" ry="17.8" fill="#fff" stroke="#000" stroke-width="3.0"/><path d="M57.2 880.3l4.300 -1.700v13.400M57.1 892h8.600" stroke="#000" stroke-width="1.750" fill="none" stroke-linejoin="miter"/><text x="68.1" y="892.1" font-family="Liberation Sans, sans-serif" font-size="20.8" textLength="10.400" lengthAdjust="spacingAndGlyphs" fill="#000">0</text><ellipse cx="157.3" cy="885.7" rx="15.8" ry="17.8" fill="#fff" stroke="#000" stroke-width="3.0"/><text x="151.8" y="892.3" font-family="Liberation Sans, sans-serif" font-size="20.8" textLength="10.400" lengthAdjust="spacingAndGlyphs" fill="#000">3</text><ellipse cx="311.95" cy="882.2" rx="15.8" ry="17.8" fill="#fff" stroke="#000" stroke-width="3.0"/><text x="306.45" y="888.8" font-family="Liberation Sans, sans-serif" font-size="20.8" textLength="10.400" lengthAdjust="spacingAndGlyphs" fill="#000">4</text><ellipse cx="438.5" cy="885.6" rx="15.8" ry="17.8" fill="#fff" stroke="#000" stroke-width="3.0"/><text x="433" y="892.2" font-family="Liberation Sans, sans-serif" font-size="20.8" textLength="10.400" lengthAdjust="spacingAndGlyphs" fill="#000">5</text><ellipse cx="561.4" cy="883.1" rx="15.8" ry="17.8" fill="#fff" stroke="#000" stroke-width="3.0"/><text x="555.9" y="889.7" font-family="Liberation Sans, sans-serif" font-size="20.8" textLength="10.400" lengthAdjust="spacingAndGlyphs" fill="#000">6</text><ellipse cx="677.4" cy="882.2" rx="15.8" ry="17.8" fill="#fff" stroke="#000" stroke-width="3.0"/><text x="671.9" y="888.8" font-family="Liberation Sans, sans-serif" font-size="20.8" textLength="10.400" lengthAdjust="spacingAndGlyphs" fill="#000">7</text><ellipse cx="796.6" cy="885.3" rx="15.8" ry="17.8" fill="#fff" stroke="#000" stroke-width="3.0"/><text x="791.1" y="891.9" font-family="Liberation Sans, sans-serif" font-size="20.8" textLength="10.400" lengthAdjust="spacingAndGlyphs" fill="#000">8</text><ellipse cx="912.4" cy="885.3" rx="15.8" ry="17.8" fill="#fff" stroke="#000" stroke-width="3.0"/><text x="906.9" y="891.9" font-family="Liberation Sans, sans-serif" font-size="20.8" textLength="10.400" lengthAdjust="spacingAndGlyphs" fill="#000">9</text><ellipse cx="307.6" cy="498.5" rx="15.8" ry="17.8" fill="#fff" stroke="#000" stroke-width="3.0"/><path d="M303.7 493.6l4.300 -1.700v13.400M303.6 505.3h8.600" stroke="#000" stroke-width="1.750" fill="none" stroke-linejoin="miter"/><ellipse cx="210.4" cy="725.7" rx="15.8" ry="17.8" fill="#fff" stroke="#000" stroke-width="3.0"/><text x="204.9" y="732.3" font-family="Liberation Sans, sans-serif" font-size="20.8" textLength="10.400" lengthAdjust="spacingAndGlyphs" fill="#000">2</text><ellipse cx="184.95" cy="194.4" rx="15.8" ry="17.8" fill="#fff" stroke="#000" stroke-width="3.0"/><path d="M175.25 189.5l4.300 -1.700v13.400M175.15 201.2h8.600" stroke="#000" stroke-width="1.750" fill="none" stroke-linejoin="miter"/><path d="M187.05 189.5l4.300 -1.700v13.400M186.95 201.2h8.600" stroke="#000" stroke-width="1.750" fill="none" stroke-linejoin="miter"/></svg>
</body></html>
